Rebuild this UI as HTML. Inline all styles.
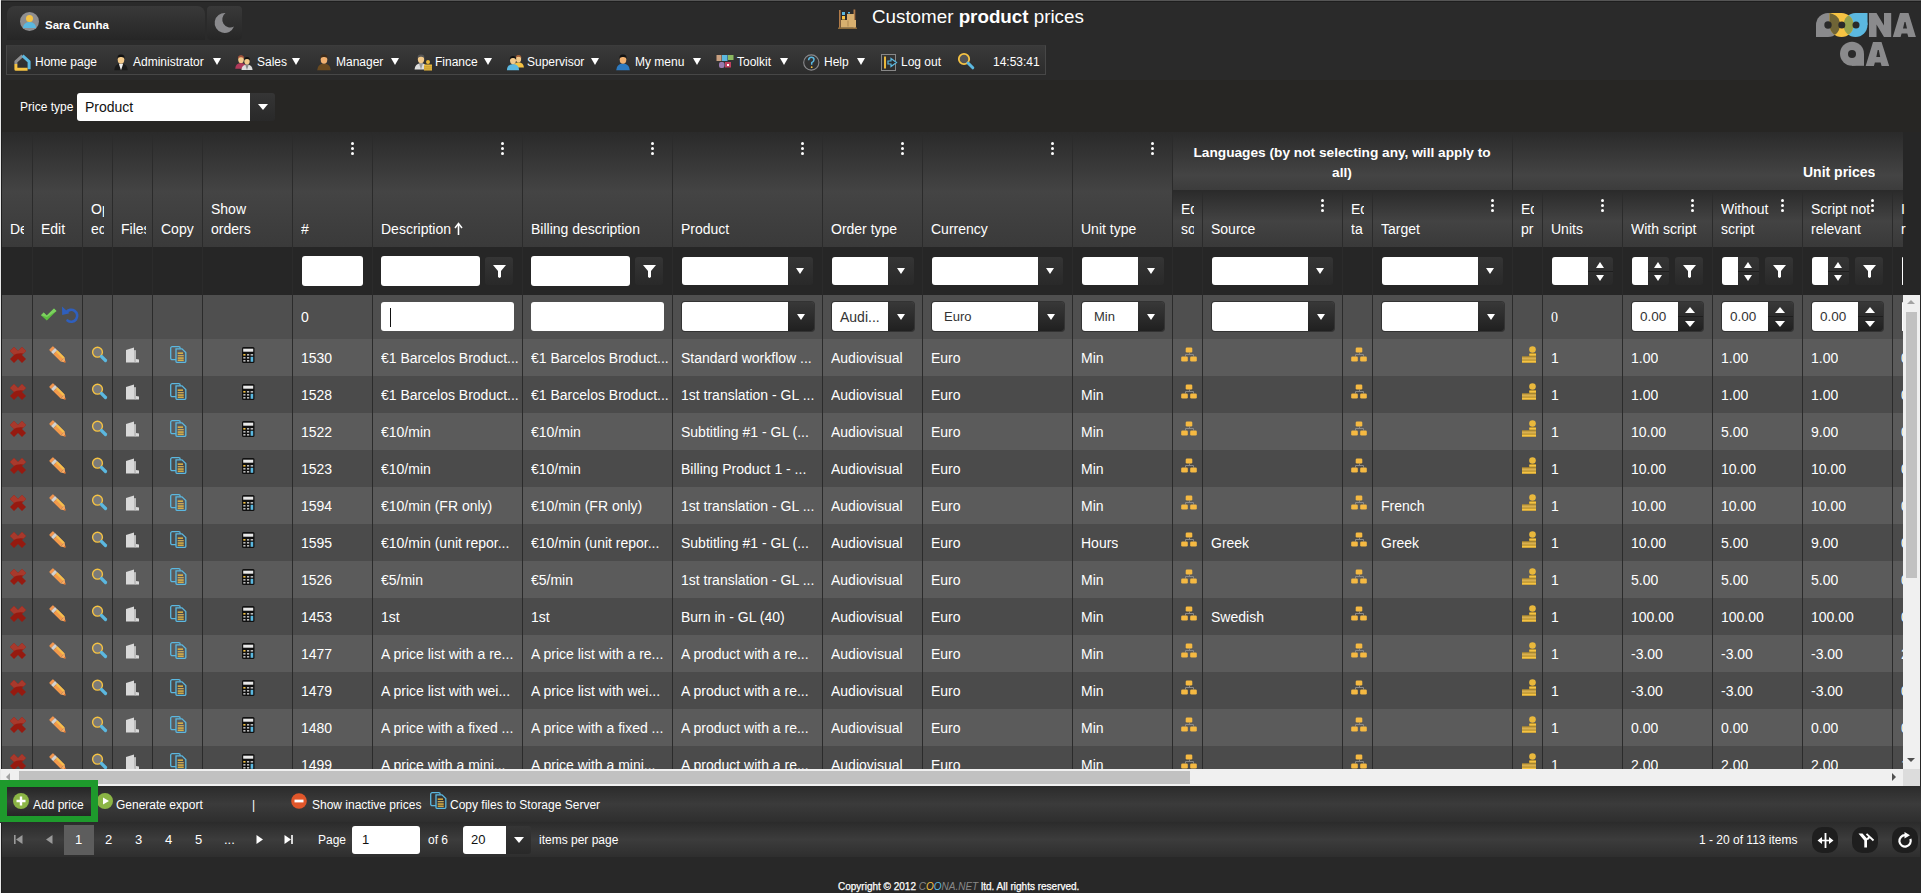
<!DOCTYPE html><html><head><meta charset="utf-8"><title>Customer product prices</title><style>
*{box-sizing:border-box;margin:0;padding:0}
html,body{width:1921px;height:893px;overflow:hidden;background:#282828;font-family:"Liberation Sans",sans-serif;color:#fff}
.a{position:absolute}
svg.a{overflow:visible}
.t{position:absolute;white-space:nowrap;line-height:16px}
.hd{position:absolute;overflow:hidden;font-size:14px;color:#fff;white-space:nowrap}
.cell{position:absolute;overflow:hidden;white-space:nowrap;font-size:14px;color:#fff;line-height:16px}
.vl{position:absolute;width:1px;background:#2b2b2b}
.dots{position:absolute;width:3px;height:13px}
.dots i{position:absolute;left:0;width:3px;height:3px;border-radius:50%;background:#fff}
.inp{position:absolute;background:#fff;border-radius:3px}
.fb{position:absolute;border-radius:3px;background:linear-gradient(#353535,#292929)}
.eb{position:absolute;background:linear-gradient(#383838,#202020);box-shadow:0 0 0 1px #333}
.tri{position:absolute;width:0;height:0;border-left:5px solid transparent;border-right:5px solid transparent;border-top:6px solid #fff}
.triu{position:absolute;width:0;height:0;border-left:5px solid transparent;border-right:5px solid transparent;border-bottom:6px solid #fff}
.clip{position:absolute;overflow:hidden}
</style></head><body>
<div class="a" style="left:0;top:0;width:1921px;height:80px;background:#2a2a2a"></div>
<div class="a" style="left:0;top:80px;width:1921px;height:52px;background:#272624"></div>
<div class="a" style="left:0;top:0;width:1921px;height:1px;background:#555"></div>
<div class="a" style="left:0;top:1px;width:1921px;height:1px;background:#1e1e1e"></div>
<div class="a" style="left:7px;top:6px;width:198px;height:34px;border-radius:8px 8px 0 0;background:linear-gradient(#393939,#262626)"></div>
<div class="a" style="left:20px;top:12px;width:19px;height:19px;border-radius:50%;background:#8e8e90;overflow:hidden"><div class="a" style="left:6px;top:3px;width:7px;height:7px;border-radius:50%;background:#f6c343"></div><div class="a" style="left:3px;top:10px;width:13px;height:6px;border-radius:6px 6px 0 0;background:#5bb8e0"></div></div>
<div class="t" style="left:45px;top:17px;font-size:11.5px;font-weight:bold">Sara Cunha</div>
<div class="a" style="left:207px;top:6px;width:35px;height:34px;border-radius:4px;background:linear-gradient(#393939,#262626)"></div>
<svg class="a" style="left:213px;top:12px" width="22" height="22" viewBox="0 0 22 22"><path d="M12.5 1 A10 10 0 1 0 21 14.5 A8 8 0 0 1 12.5 1Z" fill="#8a8a8d"/></svg>
<svg class="a" style="left:838px;top:9px" width="21" height="20" viewBox="0 0 21 20"><rect x="1" y="1" width="1.6" height="19" fill="#b07a48"/><rect x="15.5" y="0.5" width="1.8" height="19.5" fill="#b07a48"/><rect x="0" y="18.5" width="19" height="1.5" fill="#8c6a3a"/><rect x="3" y="11" width="15" height="7.5" fill="#d8b070"/><rect x="9" y="5" width="7" height="6" fill="#d8b070"/><rect x="9.5" y="11.5" width="1" height="6" fill="#b08850"/><rect x="4" y="3" width="3" height="3" fill="#5bb8e0"/><rect x="4" y="7" width="3" height="3.5" fill="#f6c343"/><rect x="10" y="3" width="2" height="1.5" fill="#5bb8e0"/></svg>
<div class="t" style="left:872px;top:6px;font-size:18.8px;line-height:22px">Customer <b>product</b> prices</div>
<svg class="a" style="left:1812px;top:10px" width="106" height="58" viewBox="0 0 106 58">
<defs><clipPath id="cg"><circle cx="16" cy="15" r="12"/><rect x="4" y="15" width="12" height="12"/></clipPath>
<clipPath id="cy"><circle cx="29.5" cy="15" r="12"/><rect x="17.5" y="3" width="12" height="12"/></clipPath></defs>
<circle cx="16" cy="15" r="12" fill="#8a8a8c"/><rect x="4" y="15" width="12" height="12" fill="#8a8a8c"/>
<circle cx="43.5" cy="15" r="12" fill="#5bb8e0"/><rect x="43.5" y="3" width="12" height="12" fill="#5bb8e0"/>
<circle cx="29.5" cy="15" r="12" fill="#f6c343"/><rect x="17.5" y="3" width="12" height="12" fill="#f6c343"/>
<g clip-path="url(#cg)"><circle cx="29.5" cy="15" r="12" fill="#6f6436"/><rect x="17.5" y="3" width="12" height="12" fill="#6f6436"/></g>
<g clip-path="url(#cy)"><circle cx="43.5" cy="15" r="12" fill="#93a04e"/></g>
<circle cx="16" cy="15" r="3.7" fill="#2a2a2a"/><circle cx="29.8" cy="15" r="3.5" fill="#2a2a2a"/><circle cx="44" cy="15" r="3.5" fill="#2a2a2a"/>
<path d="M57 27 V3 H64.5 L72 15.5 V3 H79.2 V27 H72 L64.5 14.5 V27Z" fill="#8a8a8c"/>
<path d="M80.8 27 L88 3 H96.5 L103.9 27 H96.3 L95.3 23.5 H89.6 L88.6 27Z M91 18.5 L92.5 12 H93.5 L95 18.5Z" fill="#8a8a8c" fill-rule="evenodd"/>
<circle cx="40" cy="43.8" r="12" fill="#8a8a8c"/><rect x="40" y="43.8" width="12" height="12" fill="#8a8a8c"/>
<circle cx="40" cy="44" r="4" fill="#2a2a2a"/>
<path d="M53.7 56 L61 32 H69.5 L77.2 56 H69.6 L68.6 52.5 H62.9 L61.9 56Z M64.3 47 L65.7 40 H66.8 L68.2 47Z" fill="#8a8a8c" fill-rule="evenodd"/>
</svg>
<div class="a" style="left:6px;top:45px;width:1040px;height:30px;background:linear-gradient(#3a3a3a,#2c2c2c);border:1px solid #474747;border-top-color:#3c3c3c"></div>
<div class="t" style="left:35px;top:54px;font-size:12px">Home page</div>
<svg class="a" style="left:14px;top:54px" width="17" height="17" viewBox="0 0 17 17"><path d="M1.9 10 V7.6 L8.5 1.6" stroke="#8e8e90" stroke-width="3" fill="none" stroke-linejoin="round"/><path d="M8.5 1.6 L15.1 7.6 V15.2" stroke="#5bb8e0" stroke-width="3" fill="none" stroke-linejoin="round"/><path d="M1.9 10 V15.2 H13.6" stroke="#f6c343" stroke-width="3" fill="none" stroke-linejoin="round"/></svg>
<div class="t" style="left:133px;top:54px;font-size:12px">Administrator</div>
<div class="tri" style="left:213px;top:58px;border-left-width:4px;border-right-width:4px;border-top-width:7px"></div>
<svg class="a" style="left:113px;top:54px" width="16" height="16" viewBox="0 0 16 16"><path d="M1.20 16.30 Q1.50 10.00 8.00 9.60 Q14.50 10.00 14.80 16.30 Z" fill="#1a1a1a"/><path d="M5.80 9.80 L8.00 16.30 L10.20 9.80 Z" fill="#eee"/><ellipse cx="8.00" cy="5.40" rx="3.30" ry="4.30" fill="#f2c98a"/><path d="M4.40 5.00 Q4.10 0.40 8.00 0.60 Q11.90 0.40 11.60 5.00 Q10.80 2.70 8.00 2.90 Q5.20 2.70 4.40 5.00 Z" fill="#111"/></svg>
<div class="t" style="left:257px;top:54px;font-size:12px">Sales</div>
<div class="tri" style="left:292px;top:58px;border-left-width:4px;border-right-width:4px;border-top-width:7px"></div>
<svg class="a" style="left:236px;top:54px" width="17" height="16" viewBox="0 0 17 16"><path d="M-0.78 14.67 Q-0.52 9.32 5.00 8.98 Q10.52 9.32 10.78 14.67 Z" fill="#b03a5a"/><ellipse cx="5.00" cy="5.41" rx="2.80" ry="3.65" fill="#f2c98a"/><path d="M1.94 5.07 Q1.69 1.16 5.00 1.33 Q8.31 1.16 8.06 5.07 Q7.38 3.12 5.00 3.29 Q2.62 3.12 1.94 5.07 Z" fill="#a0503a"/><path d="M5.42 15.91 Q5.67 10.74 11.00 10.42 Q16.33 10.74 16.58 15.91 Z" fill="#ddd"/><path d="M9.20 10.58 L11.00 15.91 L12.80 10.58 Z" fill="#888"/><ellipse cx="11.00" cy="6.97" rx="2.71" ry="3.53" fill="#f2c98a"/><path d="M8.05 6.64 Q7.80 2.87 11.00 3.04 Q14.20 2.87 13.95 6.64 Q13.30 4.76 11.00 4.92 Q8.70 4.76 8.05 6.64 Z" fill="#111"/></svg>
<div class="t" style="left:336px;top:54px;font-size:12px">Manager</div>
<div class="tri" style="left:391px;top:58px;border-left-width:4px;border-right-width:4px;border-top-width:7px"></div>
<svg class="a" style="left:316px;top:54px" width="16" height="16" viewBox="0 0 16 16"><path d="M1.20 16.30 Q1.50 10.00 8.00 9.60 Q14.50 10.00 14.80 16.30 Z" fill="#6a4a20"/><ellipse cx="8.00" cy="5.40" rx="3.30" ry="4.30" fill="#f0b070"/><path d="M4.40 5.00 Q4.10 0.40 8.00 0.60 Q11.90 0.40 11.60 5.00 Q10.80 2.70 8.00 2.90 Q5.20 2.70 4.40 5.00 Z" fill="#3a2a1a"/></svg>
<div class="t" style="left:435px;top:54px;font-size:12px">Finance</div>
<div class="tri" style="left:484px;top:58px;border-left-width:4px;border-right-width:4px;border-top-width:7px"></div>
<svg class="a" style="left:415px;top:54px" width="17" height="17" viewBox="0 0 17 17"><path d="M-0.46 15.53 Q-0.17 9.54 6.00 9.16 Q12.18 9.54 12.46 15.53 Z" fill="#ddd"/><path d="M3.91 9.35 L6.00 15.53 L8.09 9.35 Z" fill="#999"/><ellipse cx="6.00" cy="5.17" rx="3.13" ry="4.08" fill="#f2c98a"/><path d="M2.58 4.79 Q2.30 0.42 6.00 0.61 Q9.71 0.42 9.42 4.79 Q8.66 2.60 6.00 2.79 Q3.34 2.60 2.58 4.79 Z" fill="#555"/><circle cx="13" cy="8" r="2" fill="#e9b83c"/><rect x="9" y="10.5" width="8" height="6" fill="#e9b83c"/><rect x="9" y="12.5" width="8" height="0.8" fill="#b8922e"/><rect x="9" y="14.5" width="8" height="0.8" fill="#b8922e"/></svg>
<div class="t" style="left:527px;top:54px;font-size:12px">Supervisor</div>
<div class="tri" style="left:591px;top:58px;border-left-width:4px;border-right-width:4px;border-top-width:7px"></div>
<svg class="a" style="left:507px;top:54px" width="17" height="16" viewBox="0 0 17 16"><path d="M6.06 13.60 Q6.30 8.56 11.50 8.24 Q16.70 8.56 16.94 13.60 Z" fill="#f6c343"/><ellipse cx="11.50" cy="4.88" rx="2.64" ry="3.44" fill="#f2c98a"/><path d="M8.62 4.56 Q8.38 0.88 11.50 1.04 Q14.62 0.88 14.38 4.56 Q13.74 2.72 11.50 2.88 Q9.26 2.72 8.62 4.56 Z" fill="#a0603a"/><path d="M-0.12 16.15 Q0.15 10.48 6.00 10.12 Q11.85 10.48 12.12 16.15 Z" fill="#5bb8e0"/><ellipse cx="6.00" cy="6.34" rx="2.97" ry="3.87" fill="#f2c98a"/><path d="M2.76 5.98 Q2.49 1.84 6.00 2.02 Q9.51 1.84 9.24 5.98 Q8.52 3.91 6.00 4.09 Q3.48 3.91 2.76 5.98 Z" fill="#111"/></svg>
<div class="t" style="left:635px;top:54px;font-size:12px">My menu</div>
<div class="tri" style="left:693px;top:58px;border-left-width:4px;border-right-width:4px;border-top-width:7px"></div>
<svg class="a" style="left:615px;top:54px" width="16" height="16" viewBox="0 0 16 16"><path d="M1.20 16.30 Q1.50 10.00 8.00 9.60 Q14.50 10.00 14.80 16.30 Z" fill="#2d7ac0"/><ellipse cx="8.00" cy="5.40" rx="3.30" ry="4.30" fill="#f0b070"/><path d="M4.40 5.00 Q4.10 0.40 8.00 0.60 Q11.90 0.40 11.60 5.00 Q10.80 2.70 8.00 2.90 Q5.20 2.70 4.40 5.00 Z" fill="#111"/></svg>
<div class="t" style="left:737px;top:54px;font-size:12px">Toolkit</div>
<div class="tri" style="left:780px;top:58px;border-left-width:4px;border-right-width:4px;border-top-width:7px"></div>
<svg class="a" style="left:716px;top:54px" width="18" height="15" viewBox="0 0 18 15"><rect x="0.5" y="1" width="5" height="6" fill="#c9a080"/><rect x="6" y="1" width="5.5" height="6" fill="#5bb8e0"/><rect x="12" y="1" width="5.5" height="5" fill="#8ab860"/><rect x="3" y="8" width="5.5" height="6" rx="2" fill="#9a7ab0"/><rect x="9" y="8" width="6" height="5.5" fill="#c04060"/><rect x="11" y="10" width="2" height="2" fill="#fff"/></svg>
<div class="t" style="left:824px;top:54px;font-size:12px">Help</div>
<div class="tri" style="left:857px;top:58px;border-left-width:4px;border-right-width:4px;border-top-width:7px"></div>
<svg class="a" style="left:803px;top:54px" width="17" height="17" viewBox="0 0 17 17"><circle cx="8.3" cy="8.5" r="7.6" fill="none" stroke="#8a8a8d" stroke-width="1.1"/><path d="M5.6 6.2 Q5.8 3.3 8.4 3.3 Q11 3.3 11 5.7 Q11 7.4 8.7 8.6 V10.8" fill="none" stroke="#5bb8e0" stroke-width="1.5"/><circle cx="8.7" cy="13.2" r="0.9" fill="#f6c343"/></svg>
<div class="t" style="left:901px;top:54px;font-size:12px">Log out</div>
<svg class="a" style="left:881px;top:54px" width="17" height="17" viewBox="0 0 17 17"><rect x="0.5" y="0.5" width="14" height="16" fill="none" stroke="#888" stroke-width="1"/><rect x="3" y="2.5" width="2" height="12" fill="#e9b83c"/><path d="M7 7 H10 V4.5 L15.5 8.5 L10 12.5 V10 H7Z" fill="#2a2a2a" stroke="#5bb8e0" stroke-width="1.2"/></svg>
<div class="t" style="left:993px;top:54px;font-size:12px">14:53:41</div>
<svg class="a" style="left:957px;top:52px" width="18" height="18" viewBox="0 0 18 18"><circle cx="7" cy="7" r="5.2" fill="#555" stroke="#f6c343" stroke-width="1.8"/><path d="M11 11 L15.8 15.8" stroke="#5bb8e0" stroke-width="3" stroke-linecap="round"/></svg>
<div class="t" style="left:20px;top:99px;font-size:12px">Price type</div>
<div class="inp" style="left:77px;top:93px;width:174px;height:28px;border-radius:3px 0 0 3px"></div>
<div class="t" style="left:85px;top:99px;font-size:14px;color:#111">Product</div>
<div class="fb" style="left:250px;top:93px;width:25px;height:28px;border-radius:0 3px 3px 0"></div>
<div class="tri" style="left:258px;top:104px"></div>
<div class="a" style="left:0;top:132px;width:1921px;height:637px;background:#262626"></div>
<div class="a" style="left:1px;top:132px;width:1171px;height:115px;background:linear-gradient(#2a2a2a 0%,#444 52%,#3a3a3a 100%)"></div>
<div class="a" style="left:1172px;top:132px;width:731px;height:58px;background:linear-gradient(#2a2a2a 0%,#444 75%,#3c3c3c 100%)"></div>
<div class="a" style="left:1172px;top:190px;width:731px;height:57px;background:linear-gradient(#2a2a2a 0%,#434343 55%,#393939 100%)"></div>
<div class="a" style="left:1px;top:247px;width:1902px;height:48px;background:#262626"></div>
<div class="a" style="left:1px;top:295px;width:1902px;height:44px;background:#4f4f4f"></div>
<div class="a" style="left:1px;top:339px;width:1902px;height:37px;background:#5b5b5b"></div>
<div class="a" style="left:1px;top:376px;width:1902px;height:37px;background:#4b4b4b"></div>
<div class="a" style="left:1px;top:413px;width:1902px;height:37px;background:#5b5b5b"></div>
<div class="a" style="left:1px;top:450px;width:1902px;height:37px;background:#4b4b4b"></div>
<div class="a" style="left:1px;top:487px;width:1902px;height:37px;background:#5b5b5b"></div>
<div class="a" style="left:1px;top:524px;width:1902px;height:37px;background:#4b4b4b"></div>
<div class="a" style="left:1px;top:561px;width:1902px;height:37px;background:#5b5b5b"></div>
<div class="a" style="left:1px;top:598px;width:1902px;height:37px;background:#4b4b4b"></div>
<div class="a" style="left:1px;top:635px;width:1902px;height:37px;background:#5b5b5b"></div>
<div class="a" style="left:1px;top:672px;width:1902px;height:37px;background:#4b4b4b"></div>
<div class="a" style="left:1px;top:709px;width:1902px;height:37px;background:#5b5b5b"></div>
<div class="a" style="left:1px;top:746px;width:1902px;height:37px;background:#4b4b4b"></div>
<div class="vl" style="left:32px;top:132px;height:637px"></div>
<div class="vl" style="left:82px;top:132px;height:637px"></div>
<div class="vl" style="left:112px;top:132px;height:637px"></div>
<div class="vl" style="left:152px;top:132px;height:637px"></div>
<div class="vl" style="left:202px;top:132px;height:637px"></div>
<div class="vl" style="left:292px;top:132px;height:637px"></div>
<div class="vl" style="left:372px;top:132px;height:637px"></div>
<div class="vl" style="left:522px;top:132px;height:637px"></div>
<div class="vl" style="left:672px;top:132px;height:637px"></div>
<div class="vl" style="left:822px;top:132px;height:637px"></div>
<div class="vl" style="left:922px;top:132px;height:637px"></div>
<div class="vl" style="left:1072px;top:132px;height:637px"></div>
<div class="vl" style="left:1172px;top:132px;height:637px"></div>
<div class="vl" style="left:1202px;top:190px;height:579px"></div>
<div class="vl" style="left:1342px;top:190px;height:579px"></div>
<div class="vl" style="left:1372px;top:190px;height:579px"></div>
<div class="vl" style="left:1512px;top:132px;height:637px"></div>
<div class="vl" style="left:1542px;top:190px;height:579px"></div>
<div class="vl" style="left:1622px;top:190px;height:579px"></div>
<div class="vl" style="left:1712px;top:190px;height:579px"></div>
<div class="vl" style="left:1802px;top:190px;height:579px"></div>
<div class="vl" style="left:1892px;top:190px;height:579px"></div>
<div class="hd" style="left:10px;top:221px;width:14px;height:17px;line-height:16px">De</div>
<div class="hd" style="left:41px;top:221px;width:33px;height:17px;line-height:16px">Edit</div>
<div class="hd" style="left:91px;top:201px;width:13px;height:17px;line-height:16px">Op</div>
<div class="hd" style="left:91px;top:221px;width:13px;height:17px;line-height:16px">ec</div>
<div class="hd" style="left:121px;top:221px;width:25px;height:17px;line-height:16px">Files</div>
<div class="hd" style="left:161px;top:221px;width:33px;height:17px;line-height:16px">Copy</div>
<div class="hd" style="left:211px;top:201px;width:73px;height:17px;line-height:16px">Show</div>
<div class="hd" style="left:211px;top:221px;width:73px;height:17px;line-height:16px">orders</div>
<div class="hd" style="left:301px;top:221px;width:63px;height:17px;line-height:16px">#</div>
<div class="hd" style="left:381px;top:221px;width:133px;height:17px;line-height:16px">Description</div>
<div class="hd" style="left:531px;top:221px;width:133px;height:17px;line-height:16px">Billing description</div>
<div class="hd" style="left:681px;top:221px;width:133px;height:17px;line-height:16px">Product</div>
<div class="hd" style="left:831px;top:221px;width:83px;height:17px;line-height:16px">Order type</div>
<div class="hd" style="left:931px;top:221px;width:133px;height:17px;line-height:16px">Currency</div>
<div class="hd" style="left:1081px;top:221px;width:83px;height:17px;line-height:16px">Unit type</div>
<div class="hd" style="left:1181px;top:201px;width:13px;height:17px;line-height:16px">Ed</div>
<div class="hd" style="left:1181px;top:221px;width:13px;height:17px;line-height:16px">so</div>
<div class="hd" style="left:1211px;top:221px;width:123px;height:17px;line-height:16px">Source</div>
<div class="hd" style="left:1351px;top:201px;width:13px;height:17px;line-height:16px">Ed</div>
<div class="hd" style="left:1351px;top:221px;width:13px;height:17px;line-height:16px">ta</div>
<div class="hd" style="left:1381px;top:221px;width:123px;height:17px;line-height:16px">Target</div>
<div class="hd" style="left:1521px;top:201px;width:13px;height:17px;line-height:16px">Ed</div>
<div class="hd" style="left:1521px;top:221px;width:13px;height:17px;line-height:16px">pr</div>
<div class="hd" style="left:1551px;top:221px;width:63px;height:17px;line-height:16px">Units</div>
<div class="hd" style="left:1631px;top:221px;width:73px;height:17px;line-height:16px">With script</div>
<div class="hd" style="left:1721px;top:201px;width:73px;height:17px;line-height:16px">Without</div>
<div class="hd" style="left:1721px;top:221px;width:73px;height:17px;line-height:16px">script</div>
<div class="hd" style="left:1811px;top:201px;width:73px;height:17px;line-height:16px">Script not</div>
<div class="hd" style="left:1811px;top:221px;width:73px;height:17px;line-height:16px">relevant</div>
<div class="hd" style="left:1901px;top:201px;width:-6px;height:17px;line-height:16px">I</div>
<div class="hd" style="left:1901px;top:221px;width:-6px;height:17px;line-height:16px">r</div>
<svg class="a" style="left:455px;top:223px" width="7" height="12" viewBox="0 0 7 12"><path d="M3.5 1.5 V12" stroke="#fff" stroke-width="1.6"/><path d="M0 5 L3.5 0.5 L7 5" fill="none" stroke="#fff" stroke-width="1.5"/></svg>
<div class="dots" style="left:351px;top:142px"><i style="top:0"></i><i style="top:5px"></i><i style="top:10px"></i></div>
<div class="dots" style="left:501px;top:142px"><i style="top:0"></i><i style="top:5px"></i><i style="top:10px"></i></div>
<div class="dots" style="left:651px;top:142px"><i style="top:0"></i><i style="top:5px"></i><i style="top:10px"></i></div>
<div class="dots" style="left:801px;top:142px"><i style="top:0"></i><i style="top:5px"></i><i style="top:10px"></i></div>
<div class="dots" style="left:901px;top:142px"><i style="top:0"></i><i style="top:5px"></i><i style="top:10px"></i></div>
<div class="dots" style="left:1051px;top:142px"><i style="top:0"></i><i style="top:5px"></i><i style="top:10px"></i></div>
<div class="dots" style="left:1151px;top:142px"><i style="top:0"></i><i style="top:5px"></i><i style="top:10px"></i></div>
<div class="dots" style="left:1321px;top:199px"><i style="top:0"></i><i style="top:5px"></i><i style="top:10px"></i></div>
<div class="dots" style="left:1491px;top:199px"><i style="top:0"></i><i style="top:5px"></i><i style="top:10px"></i></div>
<div class="dots" style="left:1601px;top:199px"><i style="top:0"></i><i style="top:5px"></i><i style="top:10px"></i></div>
<div class="dots" style="left:1691px;top:199px"><i style="top:0"></i><i style="top:5px"></i><i style="top:10px"></i></div>
<div class="dots" style="left:1781px;top:199px"><i style="top:0"></i><i style="top:5px"></i><i style="top:10px"></i></div>
<div class="dots" style="left:1871px;top:199px"><i style="top:0"></i><i style="top:5px"></i><i style="top:10px"></i></div>
<div class="hd" style="left:1172px;top:143px;width:340px;text-align:center;font-weight:bold;font-size:13.7px;line-height:19.5px;white-space:normal;padding:0 18px">Languages (by not selecting any, will apply to all)</div>
<div class="hd" style="left:1803px;top:164px;font-weight:bold;line-height:16px">Unit prices</div>
<div class="inp" style="left:302px;top:256px;width:61px;height:30px;"></div>
<div class="inp" style="left:381px;top:256px;width:99px;height:30px;"></div>
<div class="fb" style="left:485px;top:257px;width:28px;height:28px"></div>
<svg class="a" style="left:493px;top:265px" width="13" height="13" viewBox="0 0 13 13"><path d="M0 0 H13 L8 6 V12 L6.5 13 L5 12 V6Z" fill="#fff"/></svg>
<div class="inp" style="left:531px;top:256px;width:99px;height:30px;"></div>
<div class="fb" style="left:635px;top:257px;width:28px;height:28px"></div>
<svg class="a" style="left:643px;top:265px" width="13" height="13" viewBox="0 0 13 13"><path d="M0 0 H13 L8 6 V12 L6.5 13 L5 12 V6Z" fill="#fff"/></svg>
<div class="fb" style="left:682px;top:257px;width:131px;height:28px;border-radius:3px"></div>
<div class="inp" style="left:682px;top:257px;width:106px;height:28px;border-radius:3px 0 0 3px"></div>
<div class="tri" style="left:796px;top:268px;border-left-width:4.5px;border-right-width:4.5px"></div>
<div class="fb" style="left:832px;top:257px;width:82px;height:28px;border-radius:3px"></div>
<div class="inp" style="left:832px;top:257px;width:56px;height:28px;border-radius:3px 0 0 3px"></div>
<div class="tri" style="left:897px;top:268px;border-left-width:4.5px;border-right-width:4.5px"></div>
<div class="fb" style="left:932px;top:257px;width:131px;height:28px;border-radius:3px"></div>
<div class="inp" style="left:932px;top:257px;width:106px;height:28px;border-radius:3px 0 0 3px"></div>
<div class="tri" style="left:1046px;top:268px;border-left-width:4.5px;border-right-width:4.5px"></div>
<div class="fb" style="left:1082px;top:257px;width:82px;height:28px;border-radius:3px"></div>
<div class="inp" style="left:1082px;top:257px;width:56px;height:28px;border-radius:3px 0 0 3px"></div>
<div class="tri" style="left:1147px;top:268px;border-left-width:4.5px;border-right-width:4.5px"></div>
<div class="fb" style="left:1212px;top:257px;width:121px;height:28px;border-radius:3px"></div>
<div class="inp" style="left:1212px;top:257px;width:96px;height:28px;border-radius:3px 0 0 3px"></div>
<div class="tri" style="left:1316px;top:268px;border-left-width:4.5px;border-right-width:4.5px"></div>
<div class="fb" style="left:1382px;top:257px;width:121px;height:28px;border-radius:3px"></div>
<div class="inp" style="left:1382px;top:257px;width:96px;height:28px;border-radius:3px 0 0 3px"></div>
<div class="tri" style="left:1486px;top:268px;border-left-width:4.5px;border-right-width:4.5px"></div>
<div class="fb" style="left:1552px;top:257px;width:61px;height:28px;border-radius:3px"></div>
<div class="inp" style="left:1552px;top:257px;width:36px;height:28px;border-radius:3px 0 0 3px"></div>
<div class="a" style="left:1588px;top:271px;width:25px;height:1px;background:#1e1e1e"></div>
<div class="triu" style="left:1596px;top:262px;border-left-width:4.5px;border-right-width:4.5px;border-bottom-width:6px"></div>
<div class="tri" style="left:1596px;top:275px;border-left-width:4.5px;border-right-width:4.5px;border-top-width:6px"></div>
<div class="fb" style="left:1632px;top:257px;width:37px;height:28px;border-radius:3px"></div>
<div class="inp" style="left:1632px;top:257px;width:16px;height:28px;border-radius:3px 0 0 3px"></div>
<div class="a" style="left:1648px;top:271px;width:21px;height:1px;background:#1e1e1e"></div>
<div class="triu" style="left:1654px;top:262px;border-left-width:4.5px;border-right-width:4.5px;border-bottom-width:6px"></div>
<div class="tri" style="left:1654px;top:275px;border-left-width:4.5px;border-right-width:4.5px;border-top-width:6px"></div>
<div class="fb" style="left:1675px;top:257px;width:28px;height:28px"></div>
<svg class="a" style="left:1683px;top:265px" width="13" height="13" viewBox="0 0 13 13"><path d="M0 0 H13 L8 6 V12 L6.5 13 L5 12 V6Z" fill="#fff"/></svg>
<div class="fb" style="left:1722px;top:257px;width:37px;height:28px;border-radius:3px"></div>
<div class="inp" style="left:1722px;top:257px;width:16px;height:28px;border-radius:3px 0 0 3px"></div>
<div class="a" style="left:1738px;top:271px;width:21px;height:1px;background:#1e1e1e"></div>
<div class="triu" style="left:1744px;top:262px;border-left-width:4.5px;border-right-width:4.5px;border-bottom-width:6px"></div>
<div class="tri" style="left:1744px;top:275px;border-left-width:4.5px;border-right-width:4.5px;border-top-width:6px"></div>
<div class="fb" style="left:1765px;top:257px;width:28px;height:28px"></div>
<svg class="a" style="left:1773px;top:265px" width="13" height="13" viewBox="0 0 13 13"><path d="M0 0 H13 L8 6 V12 L6.5 13 L5 12 V6Z" fill="#fff"/></svg>
<div class="fb" style="left:1812px;top:257px;width:37px;height:28px;border-radius:3px"></div>
<div class="inp" style="left:1812px;top:257px;width:16px;height:28px;border-radius:3px 0 0 3px"></div>
<div class="a" style="left:1828px;top:271px;width:21px;height:1px;background:#1e1e1e"></div>
<div class="triu" style="left:1834px;top:262px;border-left-width:4.5px;border-right-width:4.5px;border-bottom-width:6px"></div>
<div class="tri" style="left:1834px;top:275px;border-left-width:4.5px;border-right-width:4.5px;border-top-width:6px"></div>
<div class="fb" style="left:1855px;top:257px;width:28px;height:28px"></div>
<svg class="a" style="left:1863px;top:265px" width="13" height="13" viewBox="0 0 13 13"><path d="M0 0 H13 L8 6 V12 L6.5 13 L5 12 V6Z" fill="#fff"/></svg>
<div class="inp" style="left:1902px;top:257px;width:1px;height:28px;"></div>
<svg class="a" style="left:41px;top:308px" width="16" height="13" viewBox="0 0 16 13"><path d="M0 7.2 L2.7 4.6 L5.8 7.6 L13 0.5 L15.5 3 L5.8 12.6Z" fill="#5cbf3f"/><path d="M0 7.2 L2.7 4.6 L5.8 7.6 L13 0.5 L15.5 3 L5.8 9Z" fill="#7dd060"/></svg>
<svg class="a" style="left:61px;top:306px" width="17" height="17" viewBox="0 0 17 17"><path d="M5.2 6.5 A6 6 0 1 1 6.5 14.5" fill="none" stroke="#2f5fbd" stroke-width="2.6" stroke-linecap="round"/><path d="M1 0.5 L1.2 9 L8.5 7.2Z" fill="#2f5fbd"/></svg>
<div class="cell" style="left:301px;top:309px">0</div>
<div class="inp" style="left:381px;top:302px;width:133px;height:29px;"></div>
<div class="a" style="left:390px;top:308px;width:1px;height:19px;background:#111"></div>
<div class="inp" style="left:531px;top:302px;width:133px;height:29px;"></div>
<div class="eb" style="left:682px;top:302px;width:132px;height:29px;border-radius:3px"></div>
<div class="inp" style="left:682px;top:302px;width:106px;height:29px;border-radius:3px 0 0 3px"></div>
<div class="tri" style="left:797px;top:314px;border-left-width:4.5px;border-right-width:4.5px"></div>
<div class="eb" style="left:832px;top:302px;width:82px;height:29px;border-radius:3px"></div>
<div class="inp" style="left:832px;top:302px;width:56px;height:29px;border-radius:3px 0 0 3px"></div>
<div class="tri" style="left:897px;top:314px;border-left-width:4.5px;border-right-width:4.5px"></div>
<div class="t" style="left:840px;top:309px;font-size:14px;color:#333">Audi...</div>
<div class="eb" style="left:932px;top:302px;width:132px;height:29px;border-radius:3px"></div>
<div class="inp" style="left:932px;top:302px;width:106px;height:29px;border-radius:3px 0 0 3px"></div>
<div class="tri" style="left:1047px;top:314px;border-left-width:4.5px;border-right-width:4.5px"></div>
<div class="t" style="left:944px;top:309px;font-size:13px;color:#333">Euro</div>
<div class="eb" style="left:1082px;top:302px;width:82px;height:29px;border-radius:3px"></div>
<div class="inp" style="left:1082px;top:302px;width:56px;height:29px;border-radius:3px 0 0 3px"></div>
<div class="tri" style="left:1147px;top:314px;border-left-width:4.5px;border-right-width:4.5px"></div>
<div class="t" style="left:1094px;top:309px;font-size:13px;color:#333">Min</div>
<div class="eb" style="left:1212px;top:302px;width:122px;height:29px;border-radius:3px"></div>
<div class="inp" style="left:1212px;top:302px;width:96px;height:29px;border-radius:3px 0 0 3px"></div>
<div class="tri" style="left:1317px;top:314px;border-left-width:4.5px;border-right-width:4.5px"></div>
<div class="eb" style="left:1382px;top:302px;width:122px;height:29px;border-radius:3px"></div>
<div class="inp" style="left:1382px;top:302px;width:96px;height:29px;border-radius:3px 0 0 3px"></div>
<div class="tri" style="left:1487px;top:314px;border-left-width:4.5px;border-right-width:4.5px"></div>
<div class="cell" style="left:1551px;top:310px;font-family:'Liberation Serif',serif">0</div>
<div class="eb" style="left:1632px;top:302px;width:71px;height:29px;border-radius:3px"></div>
<div class="inp" style="left:1632px;top:302px;width:46px;height:29px;border-radius:3px 0 0 3px"></div>
<div class="a" style="left:1678px;top:316px;width:25px;height:1px;background:#1e1e1e"></div>
<div class="triu" style="left:1685px;top:307px;border-left-width:5px;border-right-width:5px;border-bottom-width:6px"></div>
<div class="tri" style="left:1685px;top:321px;border-left-width:5px;border-right-width:5px;border-top-width:6px"></div>
<div class="t" style="left:1640px;top:309px;font-size:13.5px;color:#333">0.00</div>
<div class="eb" style="left:1722px;top:302px;width:71px;height:29px;border-radius:3px"></div>
<div class="inp" style="left:1722px;top:302px;width:46px;height:29px;border-radius:3px 0 0 3px"></div>
<div class="a" style="left:1768px;top:316px;width:25px;height:1px;background:#1e1e1e"></div>
<div class="triu" style="left:1775px;top:307px;border-left-width:5px;border-right-width:5px;border-bottom-width:6px"></div>
<div class="tri" style="left:1775px;top:321px;border-left-width:5px;border-right-width:5px;border-top-width:6px"></div>
<div class="t" style="left:1730px;top:309px;font-size:13.5px;color:#333">0.00</div>
<div class="eb" style="left:1812px;top:302px;width:71px;height:29px;border-radius:3px"></div>
<div class="inp" style="left:1812px;top:302px;width:46px;height:29px;border-radius:3px 0 0 3px"></div>
<div class="a" style="left:1858px;top:316px;width:25px;height:1px;background:#1e1e1e"></div>
<div class="triu" style="left:1865px;top:307px;border-left-width:5px;border-right-width:5px;border-bottom-width:6px"></div>
<div class="tri" style="left:1865px;top:321px;border-left-width:5px;border-right-width:5px;border-top-width:6px"></div>
<div class="t" style="left:1820px;top:309px;font-size:13.5px;color:#333">0.00</div>
<div class="inp" style="left:1902px;top:302px;width:1px;height:29px;"></div>
<div class="cell" style="left:301px;top:350px">1530</div>
<div class="cell" style="left:381px;top:350px">€1 Barcelos Broduct...</div>
<div class="cell" style="left:531px;top:350px">€1 Barcelos Broduct...</div>
<div class="cell" style="left:681px;top:350px">Standard workflow ...</div>
<div class="cell" style="left:831px;top:350px">Audiovisual</div>
<div class="cell" style="left:931px;top:350px">Euro</div>
<div class="cell" style="left:1081px;top:350px">Min</div>
<div class="cell" style="left:1551px;top:350px">1</div>
<div class="cell" style="left:1631px;top:350px">1.00</div>
<div class="cell" style="left:1721px;top:350px">1.00</div>
<div class="cell" style="left:1811px;top:350px">1.00</div>
<div class="clip" style="left:1893px;top:339px;width:10px;height:37px"><div class="cell" style="left:8px;top:11px">0</div></div>
<svg class="a" style="left:10px;top:347px" width="16" height="16" viewBox="0 0 16 16"><path d="M0 4 L4 0 L8 4 L12 0 L16 4 L12 8 L16 12 L12 16 L8 12 L4 16 L0 12 L4 8Z" fill="#961a10"/><path d="M0 4 L4 0 L8 4 L12 0 L16 4 L13.5 6.5 Q8 5.5 2.5 8.5 L4 8Z" fill="#a8392c"/></svg>
<svg class="a" style="left:50px;top:347px" width="16" height="16" viewBox="0 0 16 16"><g transform="rotate(45 8 8)"><rect x="-2" y="5.2" width="3.2" height="5.6" rx="1" fill="#f2954e"/><rect x="1" y="5.2" width="3.2" height="5.6" fill="#d2d2d2"/><rect x="4.2" y="5.2" width="10.3" height="5.6" fill="#f39a4c"/><rect x="4.2" y="5.2" width="10.3" height="2" fill="#f4c04e"/><path d="M14.5 5.2 L18.6 8 L14.5 10.8Z" fill="#f5a860"/><path d="M17 6.9 L18.6 8 L17 9.1Z" fill="#e86a20"/></g></svg>
<svg class="a" style="left:91px;top:346px" width="17" height="17" viewBox="0 0 17 17"><circle cx="6.5" cy="6.2" r="4.9" fill="#7a7a7a" stroke="#f6c343" stroke-width="1.4"/><path d="M10.5 10.5 L14.5 14.5" stroke="#5bb8e0" stroke-width="3.2" stroke-linecap="round"/></svg>
<svg class="a" style="left:125px;top:347px" width="15" height="16" viewBox="0 0 15 16"><path d="M1 3 L9 0.5 L9 3.5 L11 3.5 L11 12 L14 12.5 L14 15.5 L1 15.5Z" fill="#d9d9d9"/><path d="M9 3.5 L9 14.5 L11 15.5 L11 3.5Z" fill="#bdbdbd"/></svg>
<svg class="a" style="left:170px;top:346px" width="17" height="17" viewBox="0 0 17 17"><rect x="0.7" y="0.7" width="9.5" height="13" rx="1.5" fill="none" stroke="#5bb8e0" stroke-width="1.3"/><path d="M6 2.8 H12 L15.8 6.6 V15.5 Q15.8 16.3 15 16.3 H6.8 Q6 16.3 6 15.5Z" fill="#5b5b5b" stroke="#5bb8e0" stroke-width="1.3"/><rect x="7.7" y="6.5" width="5.3" height="1.3" fill="#f6c343"/><rect x="7.7" y="9" width="6" height="1.3" fill="#c9a85a"/><rect x="7.7" y="11.4" width="6" height="1.3" fill="#f6c343"/><rect x="7.7" y="13.6" width="6" height="1.2" fill="#f6c343"/></svg>
<svg class="a" style="left:242px;top:347px" width="13" height="16" viewBox="0 0 13 16"><rect x="0" y="0" width="12.5" height="16" rx="1.5" fill="#111"/><rect x="1.2" y="1.7" width="10" height="3" fill="#e8e8e8"/><rect x="1.3" y="7" width="2.2" height="1.6" fill="#f6c343"/><rect x="5" y="7" width="2.2" height="1.6" fill="#bbb"/><rect x="8.6" y="7" width="2.5" height="1.6" fill="#bbb"/><rect x="1.3" y="10" width="2.2" height="1.6" fill="#bbb"/><rect x="5" y="10" width="2.2" height="1.6" fill="#bbb"/><rect x="1.3" y="13" width="2.2" height="1.6" fill="#bbb"/><rect x="5" y="13" width="2.2" height="1.6" fill="#bbb"/><rect x="8.6" y="9.8" width="2.6" height="5" fill="#5bb8e0"/></svg>
<svg class="a" style="left:1181px;top:347px" width="17" height="16" viewBox="0 0 17 16"><path d="M8.5 5.5 V7.5 M4.5 9.5 V7.5 H12.5 V9.5" stroke="#888" stroke-width="1" fill="none"/><rect x="4.7" y="0.5" width="6.6" height="5" rx="1.3" fill="#f5b942"/><rect x="0.2" y="9.5" width="6.6" height="5" rx="1.3" fill="#f5b942"/><rect x="9.2" y="9.5" width="6.6" height="5" rx="1.3" fill="#f5b942"/></svg>
<svg class="a" style="left:1351px;top:347px" width="17" height="16" viewBox="0 0 17 16"><path d="M8.5 5.5 V7.5 M4.5 9.5 V7.5 H12.5 V9.5" stroke="#888" stroke-width="1" fill="none"/><rect x="4.7" y="0.5" width="6.6" height="5" rx="1.3" fill="#f5b942"/><rect x="0.2" y="9.5" width="6.6" height="5" rx="1.3" fill="#f5b942"/><rect x="9.2" y="9.5" width="6.6" height="5" rx="1.3" fill="#f5b942"/></svg>
<svg class="a" style="left:1522px;top:346px" width="16" height="17" viewBox="0 0 16 17"><circle cx="10.5" cy="3.5" r="3.3" fill="#e9b83c"/><rect x="7.3" y="7" width="6.7" height="3.4" fill="#b8922e"/><rect x="7.3" y="8" width="6.7" height="1.5" fill="#f6c343"/><rect x="0" y="10.3" width="14" height="6.5" fill="#b8922e"/><rect x="0" y="11.5" width="14" height="2" fill="#d9b050"/><rect x="0" y="14.7" width="14" height="1.8" fill="#f6c343"/></svg>
<div class="cell" style="left:301px;top:387px">1528</div>
<div class="cell" style="left:381px;top:387px">€1 Barcelos Broduct...</div>
<div class="cell" style="left:531px;top:387px">€1 Barcelos Broduct...</div>
<div class="cell" style="left:681px;top:387px">1st translation - GL ...</div>
<div class="cell" style="left:831px;top:387px">Audiovisual</div>
<div class="cell" style="left:931px;top:387px">Euro</div>
<div class="cell" style="left:1081px;top:387px">Min</div>
<div class="cell" style="left:1551px;top:387px">1</div>
<div class="cell" style="left:1631px;top:387px">1.00</div>
<div class="cell" style="left:1721px;top:387px">1.00</div>
<div class="cell" style="left:1811px;top:387px">1.00</div>
<div class="clip" style="left:1893px;top:376px;width:10px;height:37px"><div class="cell" style="left:8px;top:11px">0</div></div>
<svg class="a" style="left:10px;top:384px" width="16" height="16" viewBox="0 0 16 16"><path d="M0 4 L4 0 L8 4 L12 0 L16 4 L12 8 L16 12 L12 16 L8 12 L4 16 L0 12 L4 8Z" fill="#961a10"/><path d="M0 4 L4 0 L8 4 L12 0 L16 4 L13.5 6.5 Q8 5.5 2.5 8.5 L4 8Z" fill="#a8392c"/></svg>
<svg class="a" style="left:50px;top:384px" width="16" height="16" viewBox="0 0 16 16"><g transform="rotate(45 8 8)"><rect x="-2" y="5.2" width="3.2" height="5.6" rx="1" fill="#f2954e"/><rect x="1" y="5.2" width="3.2" height="5.6" fill="#d2d2d2"/><rect x="4.2" y="5.2" width="10.3" height="5.6" fill="#f39a4c"/><rect x="4.2" y="5.2" width="10.3" height="2" fill="#f4c04e"/><path d="M14.5 5.2 L18.6 8 L14.5 10.8Z" fill="#f5a860"/><path d="M17 6.9 L18.6 8 L17 9.1Z" fill="#e86a20"/></g></svg>
<svg class="a" style="left:91px;top:383px" width="17" height="17" viewBox="0 0 17 17"><circle cx="6.5" cy="6.2" r="4.9" fill="#7a7a7a" stroke="#f6c343" stroke-width="1.4"/><path d="M10.5 10.5 L14.5 14.5" stroke="#5bb8e0" stroke-width="3.2" stroke-linecap="round"/></svg>
<svg class="a" style="left:125px;top:384px" width="15" height="16" viewBox="0 0 15 16"><path d="M1 3 L9 0.5 L9 3.5 L11 3.5 L11 12 L14 12.5 L14 15.5 L1 15.5Z" fill="#d9d9d9"/><path d="M9 3.5 L9 14.5 L11 15.5 L11 3.5Z" fill="#bdbdbd"/></svg>
<svg class="a" style="left:170px;top:383px" width="17" height="17" viewBox="0 0 17 17"><rect x="0.7" y="0.7" width="9.5" height="13" rx="1.5" fill="none" stroke="#5bb8e0" stroke-width="1.3"/><path d="M6 2.8 H12 L15.8 6.6 V15.5 Q15.8 16.3 15 16.3 H6.8 Q6 16.3 6 15.5Z" fill="#4b4b4b" stroke="#5bb8e0" stroke-width="1.3"/><rect x="7.7" y="6.5" width="5.3" height="1.3" fill="#f6c343"/><rect x="7.7" y="9" width="6" height="1.3" fill="#c9a85a"/><rect x="7.7" y="11.4" width="6" height="1.3" fill="#f6c343"/><rect x="7.7" y="13.6" width="6" height="1.2" fill="#f6c343"/></svg>
<svg class="a" style="left:242px;top:384px" width="13" height="16" viewBox="0 0 13 16"><rect x="0" y="0" width="12.5" height="16" rx="1.5" fill="#111"/><rect x="1.2" y="1.7" width="10" height="3" fill="#e8e8e8"/><rect x="1.3" y="7" width="2.2" height="1.6" fill="#f6c343"/><rect x="5" y="7" width="2.2" height="1.6" fill="#bbb"/><rect x="8.6" y="7" width="2.5" height="1.6" fill="#bbb"/><rect x="1.3" y="10" width="2.2" height="1.6" fill="#bbb"/><rect x="5" y="10" width="2.2" height="1.6" fill="#bbb"/><rect x="1.3" y="13" width="2.2" height="1.6" fill="#bbb"/><rect x="5" y="13" width="2.2" height="1.6" fill="#bbb"/><rect x="8.6" y="9.8" width="2.6" height="5" fill="#5bb8e0"/></svg>
<svg class="a" style="left:1181px;top:384px" width="17" height="16" viewBox="0 0 17 16"><path d="M8.5 5.5 V7.5 M4.5 9.5 V7.5 H12.5 V9.5" stroke="#888" stroke-width="1" fill="none"/><rect x="4.7" y="0.5" width="6.6" height="5" rx="1.3" fill="#f5b942"/><rect x="0.2" y="9.5" width="6.6" height="5" rx="1.3" fill="#f5b942"/><rect x="9.2" y="9.5" width="6.6" height="5" rx="1.3" fill="#f5b942"/></svg>
<svg class="a" style="left:1351px;top:384px" width="17" height="16" viewBox="0 0 17 16"><path d="M8.5 5.5 V7.5 M4.5 9.5 V7.5 H12.5 V9.5" stroke="#888" stroke-width="1" fill="none"/><rect x="4.7" y="0.5" width="6.6" height="5" rx="1.3" fill="#f5b942"/><rect x="0.2" y="9.5" width="6.6" height="5" rx="1.3" fill="#f5b942"/><rect x="9.2" y="9.5" width="6.6" height="5" rx="1.3" fill="#f5b942"/></svg>
<svg class="a" style="left:1522px;top:383px" width="16" height="17" viewBox="0 0 16 17"><circle cx="10.5" cy="3.5" r="3.3" fill="#e9b83c"/><rect x="7.3" y="7" width="6.7" height="3.4" fill="#b8922e"/><rect x="7.3" y="8" width="6.7" height="1.5" fill="#f6c343"/><rect x="0" y="10.3" width="14" height="6.5" fill="#b8922e"/><rect x="0" y="11.5" width="14" height="2" fill="#d9b050"/><rect x="0" y="14.7" width="14" height="1.8" fill="#f6c343"/></svg>
<div class="cell" style="left:301px;top:424px">1522</div>
<div class="cell" style="left:381px;top:424px">€10/min</div>
<div class="cell" style="left:531px;top:424px">€10/min</div>
<div class="cell" style="left:681px;top:424px">Subtitling #1 - GL (...</div>
<div class="cell" style="left:831px;top:424px">Audiovisual</div>
<div class="cell" style="left:931px;top:424px">Euro</div>
<div class="cell" style="left:1081px;top:424px">Min</div>
<div class="cell" style="left:1551px;top:424px">1</div>
<div class="cell" style="left:1631px;top:424px">10.00</div>
<div class="cell" style="left:1721px;top:424px">5.00</div>
<div class="cell" style="left:1811px;top:424px">9.00</div>
<div class="clip" style="left:1893px;top:413px;width:10px;height:37px"><div class="cell" style="left:8px;top:11px">0</div></div>
<svg class="a" style="left:10px;top:421px" width="16" height="16" viewBox="0 0 16 16"><path d="M0 4 L4 0 L8 4 L12 0 L16 4 L12 8 L16 12 L12 16 L8 12 L4 16 L0 12 L4 8Z" fill="#961a10"/><path d="M0 4 L4 0 L8 4 L12 0 L16 4 L13.5 6.5 Q8 5.5 2.5 8.5 L4 8Z" fill="#a8392c"/></svg>
<svg class="a" style="left:50px;top:421px" width="16" height="16" viewBox="0 0 16 16"><g transform="rotate(45 8 8)"><rect x="-2" y="5.2" width="3.2" height="5.6" rx="1" fill="#f2954e"/><rect x="1" y="5.2" width="3.2" height="5.6" fill="#d2d2d2"/><rect x="4.2" y="5.2" width="10.3" height="5.6" fill="#f39a4c"/><rect x="4.2" y="5.2" width="10.3" height="2" fill="#f4c04e"/><path d="M14.5 5.2 L18.6 8 L14.5 10.8Z" fill="#f5a860"/><path d="M17 6.9 L18.6 8 L17 9.1Z" fill="#e86a20"/></g></svg>
<svg class="a" style="left:91px;top:420px" width="17" height="17" viewBox="0 0 17 17"><circle cx="6.5" cy="6.2" r="4.9" fill="#7a7a7a" stroke="#f6c343" stroke-width="1.4"/><path d="M10.5 10.5 L14.5 14.5" stroke="#5bb8e0" stroke-width="3.2" stroke-linecap="round"/></svg>
<svg class="a" style="left:125px;top:421px" width="15" height="16" viewBox="0 0 15 16"><path d="M1 3 L9 0.5 L9 3.5 L11 3.5 L11 12 L14 12.5 L14 15.5 L1 15.5Z" fill="#d9d9d9"/><path d="M9 3.5 L9 14.5 L11 15.5 L11 3.5Z" fill="#bdbdbd"/></svg>
<svg class="a" style="left:170px;top:420px" width="17" height="17" viewBox="0 0 17 17"><rect x="0.7" y="0.7" width="9.5" height="13" rx="1.5" fill="none" stroke="#5bb8e0" stroke-width="1.3"/><path d="M6 2.8 H12 L15.8 6.6 V15.5 Q15.8 16.3 15 16.3 H6.8 Q6 16.3 6 15.5Z" fill="#5b5b5b" stroke="#5bb8e0" stroke-width="1.3"/><rect x="7.7" y="6.5" width="5.3" height="1.3" fill="#f6c343"/><rect x="7.7" y="9" width="6" height="1.3" fill="#c9a85a"/><rect x="7.7" y="11.4" width="6" height="1.3" fill="#f6c343"/><rect x="7.7" y="13.6" width="6" height="1.2" fill="#f6c343"/></svg>
<svg class="a" style="left:242px;top:421px" width="13" height="16" viewBox="0 0 13 16"><rect x="0" y="0" width="12.5" height="16" rx="1.5" fill="#111"/><rect x="1.2" y="1.7" width="10" height="3" fill="#e8e8e8"/><rect x="1.3" y="7" width="2.2" height="1.6" fill="#f6c343"/><rect x="5" y="7" width="2.2" height="1.6" fill="#bbb"/><rect x="8.6" y="7" width="2.5" height="1.6" fill="#bbb"/><rect x="1.3" y="10" width="2.2" height="1.6" fill="#bbb"/><rect x="5" y="10" width="2.2" height="1.6" fill="#bbb"/><rect x="1.3" y="13" width="2.2" height="1.6" fill="#bbb"/><rect x="5" y="13" width="2.2" height="1.6" fill="#bbb"/><rect x="8.6" y="9.8" width="2.6" height="5" fill="#5bb8e0"/></svg>
<svg class="a" style="left:1181px;top:421px" width="17" height="16" viewBox="0 0 17 16"><path d="M8.5 5.5 V7.5 M4.5 9.5 V7.5 H12.5 V9.5" stroke="#888" stroke-width="1" fill="none"/><rect x="4.7" y="0.5" width="6.6" height="5" rx="1.3" fill="#f5b942"/><rect x="0.2" y="9.5" width="6.6" height="5" rx="1.3" fill="#f5b942"/><rect x="9.2" y="9.5" width="6.6" height="5" rx="1.3" fill="#f5b942"/></svg>
<svg class="a" style="left:1351px;top:421px" width="17" height="16" viewBox="0 0 17 16"><path d="M8.5 5.5 V7.5 M4.5 9.5 V7.5 H12.5 V9.5" stroke="#888" stroke-width="1" fill="none"/><rect x="4.7" y="0.5" width="6.6" height="5" rx="1.3" fill="#f5b942"/><rect x="0.2" y="9.5" width="6.6" height="5" rx="1.3" fill="#f5b942"/><rect x="9.2" y="9.5" width="6.6" height="5" rx="1.3" fill="#f5b942"/></svg>
<svg class="a" style="left:1522px;top:420px" width="16" height="17" viewBox="0 0 16 17"><circle cx="10.5" cy="3.5" r="3.3" fill="#e9b83c"/><rect x="7.3" y="7" width="6.7" height="3.4" fill="#b8922e"/><rect x="7.3" y="8" width="6.7" height="1.5" fill="#f6c343"/><rect x="0" y="10.3" width="14" height="6.5" fill="#b8922e"/><rect x="0" y="11.5" width="14" height="2" fill="#d9b050"/><rect x="0" y="14.7" width="14" height="1.8" fill="#f6c343"/></svg>
<div class="cell" style="left:301px;top:461px">1523</div>
<div class="cell" style="left:381px;top:461px">€10/min</div>
<div class="cell" style="left:531px;top:461px">€10/min</div>
<div class="cell" style="left:681px;top:461px">Billing Product 1 - ...</div>
<div class="cell" style="left:831px;top:461px">Audiovisual</div>
<div class="cell" style="left:931px;top:461px">Euro</div>
<div class="cell" style="left:1081px;top:461px">Min</div>
<div class="cell" style="left:1551px;top:461px">1</div>
<div class="cell" style="left:1631px;top:461px">10.00</div>
<div class="cell" style="left:1721px;top:461px">10.00</div>
<div class="cell" style="left:1811px;top:461px">10.00</div>
<div class="clip" style="left:1893px;top:450px;width:10px;height:37px"><div class="cell" style="left:8px;top:11px">0</div></div>
<svg class="a" style="left:10px;top:458px" width="16" height="16" viewBox="0 0 16 16"><path d="M0 4 L4 0 L8 4 L12 0 L16 4 L12 8 L16 12 L12 16 L8 12 L4 16 L0 12 L4 8Z" fill="#961a10"/><path d="M0 4 L4 0 L8 4 L12 0 L16 4 L13.5 6.5 Q8 5.5 2.5 8.5 L4 8Z" fill="#a8392c"/></svg>
<svg class="a" style="left:50px;top:458px" width="16" height="16" viewBox="0 0 16 16"><g transform="rotate(45 8 8)"><rect x="-2" y="5.2" width="3.2" height="5.6" rx="1" fill="#f2954e"/><rect x="1" y="5.2" width="3.2" height="5.6" fill="#d2d2d2"/><rect x="4.2" y="5.2" width="10.3" height="5.6" fill="#f39a4c"/><rect x="4.2" y="5.2" width="10.3" height="2" fill="#f4c04e"/><path d="M14.5 5.2 L18.6 8 L14.5 10.8Z" fill="#f5a860"/><path d="M17 6.9 L18.6 8 L17 9.1Z" fill="#e86a20"/></g></svg>
<svg class="a" style="left:91px;top:457px" width="17" height="17" viewBox="0 0 17 17"><circle cx="6.5" cy="6.2" r="4.9" fill="#7a7a7a" stroke="#f6c343" stroke-width="1.4"/><path d="M10.5 10.5 L14.5 14.5" stroke="#5bb8e0" stroke-width="3.2" stroke-linecap="round"/></svg>
<svg class="a" style="left:125px;top:458px" width="15" height="16" viewBox="0 0 15 16"><path d="M1 3 L9 0.5 L9 3.5 L11 3.5 L11 12 L14 12.5 L14 15.5 L1 15.5Z" fill="#d9d9d9"/><path d="M9 3.5 L9 14.5 L11 15.5 L11 3.5Z" fill="#bdbdbd"/></svg>
<svg class="a" style="left:170px;top:457px" width="17" height="17" viewBox="0 0 17 17"><rect x="0.7" y="0.7" width="9.5" height="13" rx="1.5" fill="none" stroke="#5bb8e0" stroke-width="1.3"/><path d="M6 2.8 H12 L15.8 6.6 V15.5 Q15.8 16.3 15 16.3 H6.8 Q6 16.3 6 15.5Z" fill="#4b4b4b" stroke="#5bb8e0" stroke-width="1.3"/><rect x="7.7" y="6.5" width="5.3" height="1.3" fill="#f6c343"/><rect x="7.7" y="9" width="6" height="1.3" fill="#c9a85a"/><rect x="7.7" y="11.4" width="6" height="1.3" fill="#f6c343"/><rect x="7.7" y="13.6" width="6" height="1.2" fill="#f6c343"/></svg>
<svg class="a" style="left:242px;top:458px" width="13" height="16" viewBox="0 0 13 16"><rect x="0" y="0" width="12.5" height="16" rx="1.5" fill="#111"/><rect x="1.2" y="1.7" width="10" height="3" fill="#e8e8e8"/><rect x="1.3" y="7" width="2.2" height="1.6" fill="#f6c343"/><rect x="5" y="7" width="2.2" height="1.6" fill="#bbb"/><rect x="8.6" y="7" width="2.5" height="1.6" fill="#bbb"/><rect x="1.3" y="10" width="2.2" height="1.6" fill="#bbb"/><rect x="5" y="10" width="2.2" height="1.6" fill="#bbb"/><rect x="1.3" y="13" width="2.2" height="1.6" fill="#bbb"/><rect x="5" y="13" width="2.2" height="1.6" fill="#bbb"/><rect x="8.6" y="9.8" width="2.6" height="5" fill="#5bb8e0"/></svg>
<svg class="a" style="left:1181px;top:458px" width="17" height="16" viewBox="0 0 17 16"><path d="M8.5 5.5 V7.5 M4.5 9.5 V7.5 H12.5 V9.5" stroke="#888" stroke-width="1" fill="none"/><rect x="4.7" y="0.5" width="6.6" height="5" rx="1.3" fill="#f5b942"/><rect x="0.2" y="9.5" width="6.6" height="5" rx="1.3" fill="#f5b942"/><rect x="9.2" y="9.5" width="6.6" height="5" rx="1.3" fill="#f5b942"/></svg>
<svg class="a" style="left:1351px;top:458px" width="17" height="16" viewBox="0 0 17 16"><path d="M8.5 5.5 V7.5 M4.5 9.5 V7.5 H12.5 V9.5" stroke="#888" stroke-width="1" fill="none"/><rect x="4.7" y="0.5" width="6.6" height="5" rx="1.3" fill="#f5b942"/><rect x="0.2" y="9.5" width="6.6" height="5" rx="1.3" fill="#f5b942"/><rect x="9.2" y="9.5" width="6.6" height="5" rx="1.3" fill="#f5b942"/></svg>
<svg class="a" style="left:1522px;top:457px" width="16" height="17" viewBox="0 0 16 17"><circle cx="10.5" cy="3.5" r="3.3" fill="#e9b83c"/><rect x="7.3" y="7" width="6.7" height="3.4" fill="#b8922e"/><rect x="7.3" y="8" width="6.7" height="1.5" fill="#f6c343"/><rect x="0" y="10.3" width="14" height="6.5" fill="#b8922e"/><rect x="0" y="11.5" width="14" height="2" fill="#d9b050"/><rect x="0" y="14.7" width="14" height="1.8" fill="#f6c343"/></svg>
<div class="cell" style="left:301px;top:498px">1594</div>
<div class="cell" style="left:381px;top:498px">€10/min (FR only)</div>
<div class="cell" style="left:531px;top:498px">€10/min (FR only)</div>
<div class="cell" style="left:681px;top:498px">1st translation - GL ...</div>
<div class="cell" style="left:831px;top:498px">Audiovisual</div>
<div class="cell" style="left:931px;top:498px">Euro</div>
<div class="cell" style="left:1081px;top:498px">Min</div>
<div class="cell" style="left:1381px;top:498px">French</div>
<div class="cell" style="left:1551px;top:498px">1</div>
<div class="cell" style="left:1631px;top:498px">10.00</div>
<div class="cell" style="left:1721px;top:498px">10.00</div>
<div class="cell" style="left:1811px;top:498px">10.00</div>
<div class="clip" style="left:1893px;top:487px;width:10px;height:37px"><div class="cell" style="left:8px;top:11px">0</div></div>
<svg class="a" style="left:10px;top:495px" width="16" height="16" viewBox="0 0 16 16"><path d="M0 4 L4 0 L8 4 L12 0 L16 4 L12 8 L16 12 L12 16 L8 12 L4 16 L0 12 L4 8Z" fill="#961a10"/><path d="M0 4 L4 0 L8 4 L12 0 L16 4 L13.5 6.5 Q8 5.5 2.5 8.5 L4 8Z" fill="#a8392c"/></svg>
<svg class="a" style="left:50px;top:495px" width="16" height="16" viewBox="0 0 16 16"><g transform="rotate(45 8 8)"><rect x="-2" y="5.2" width="3.2" height="5.6" rx="1" fill="#f2954e"/><rect x="1" y="5.2" width="3.2" height="5.6" fill="#d2d2d2"/><rect x="4.2" y="5.2" width="10.3" height="5.6" fill="#f39a4c"/><rect x="4.2" y="5.2" width="10.3" height="2" fill="#f4c04e"/><path d="M14.5 5.2 L18.6 8 L14.5 10.8Z" fill="#f5a860"/><path d="M17 6.9 L18.6 8 L17 9.1Z" fill="#e86a20"/></g></svg>
<svg class="a" style="left:91px;top:494px" width="17" height="17" viewBox="0 0 17 17"><circle cx="6.5" cy="6.2" r="4.9" fill="#7a7a7a" stroke="#f6c343" stroke-width="1.4"/><path d="M10.5 10.5 L14.5 14.5" stroke="#5bb8e0" stroke-width="3.2" stroke-linecap="round"/></svg>
<svg class="a" style="left:125px;top:495px" width="15" height="16" viewBox="0 0 15 16"><path d="M1 3 L9 0.5 L9 3.5 L11 3.5 L11 12 L14 12.5 L14 15.5 L1 15.5Z" fill="#d9d9d9"/><path d="M9 3.5 L9 14.5 L11 15.5 L11 3.5Z" fill="#bdbdbd"/></svg>
<svg class="a" style="left:170px;top:494px" width="17" height="17" viewBox="0 0 17 17"><rect x="0.7" y="0.7" width="9.5" height="13" rx="1.5" fill="none" stroke="#5bb8e0" stroke-width="1.3"/><path d="M6 2.8 H12 L15.8 6.6 V15.5 Q15.8 16.3 15 16.3 H6.8 Q6 16.3 6 15.5Z" fill="#5b5b5b" stroke="#5bb8e0" stroke-width="1.3"/><rect x="7.7" y="6.5" width="5.3" height="1.3" fill="#f6c343"/><rect x="7.7" y="9" width="6" height="1.3" fill="#c9a85a"/><rect x="7.7" y="11.4" width="6" height="1.3" fill="#f6c343"/><rect x="7.7" y="13.6" width="6" height="1.2" fill="#f6c343"/></svg>
<svg class="a" style="left:242px;top:495px" width="13" height="16" viewBox="0 0 13 16"><rect x="0" y="0" width="12.5" height="16" rx="1.5" fill="#111"/><rect x="1.2" y="1.7" width="10" height="3" fill="#e8e8e8"/><rect x="1.3" y="7" width="2.2" height="1.6" fill="#f6c343"/><rect x="5" y="7" width="2.2" height="1.6" fill="#bbb"/><rect x="8.6" y="7" width="2.5" height="1.6" fill="#bbb"/><rect x="1.3" y="10" width="2.2" height="1.6" fill="#bbb"/><rect x="5" y="10" width="2.2" height="1.6" fill="#bbb"/><rect x="1.3" y="13" width="2.2" height="1.6" fill="#bbb"/><rect x="5" y="13" width="2.2" height="1.6" fill="#bbb"/><rect x="8.6" y="9.8" width="2.6" height="5" fill="#5bb8e0"/></svg>
<svg class="a" style="left:1181px;top:495px" width="17" height="16" viewBox="0 0 17 16"><path d="M8.5 5.5 V7.5 M4.5 9.5 V7.5 H12.5 V9.5" stroke="#888" stroke-width="1" fill="none"/><rect x="4.7" y="0.5" width="6.6" height="5" rx="1.3" fill="#f5b942"/><rect x="0.2" y="9.5" width="6.6" height="5" rx="1.3" fill="#f5b942"/><rect x="9.2" y="9.5" width="6.6" height="5" rx="1.3" fill="#f5b942"/></svg>
<svg class="a" style="left:1351px;top:495px" width="17" height="16" viewBox="0 0 17 16"><path d="M8.5 5.5 V7.5 M4.5 9.5 V7.5 H12.5 V9.5" stroke="#888" stroke-width="1" fill="none"/><rect x="4.7" y="0.5" width="6.6" height="5" rx="1.3" fill="#f5b942"/><rect x="0.2" y="9.5" width="6.6" height="5" rx="1.3" fill="#f5b942"/><rect x="9.2" y="9.5" width="6.6" height="5" rx="1.3" fill="#f5b942"/></svg>
<svg class="a" style="left:1522px;top:494px" width="16" height="17" viewBox="0 0 16 17"><circle cx="10.5" cy="3.5" r="3.3" fill="#e9b83c"/><rect x="7.3" y="7" width="6.7" height="3.4" fill="#b8922e"/><rect x="7.3" y="8" width="6.7" height="1.5" fill="#f6c343"/><rect x="0" y="10.3" width="14" height="6.5" fill="#b8922e"/><rect x="0" y="11.5" width="14" height="2" fill="#d9b050"/><rect x="0" y="14.7" width="14" height="1.8" fill="#f6c343"/></svg>
<div class="cell" style="left:301px;top:535px">1595</div>
<div class="cell" style="left:381px;top:535px">€10/min (unit repor...</div>
<div class="cell" style="left:531px;top:535px">€10/min (unit repor...</div>
<div class="cell" style="left:681px;top:535px">Subtitling #1 - GL (...</div>
<div class="cell" style="left:831px;top:535px">Audiovisual</div>
<div class="cell" style="left:931px;top:535px">Euro</div>
<div class="cell" style="left:1081px;top:535px">Hours</div>
<div class="cell" style="left:1211px;top:535px">Greek</div>
<div class="cell" style="left:1381px;top:535px">Greek</div>
<div class="cell" style="left:1551px;top:535px">1</div>
<div class="cell" style="left:1631px;top:535px">10.00</div>
<div class="cell" style="left:1721px;top:535px">5.00</div>
<div class="cell" style="left:1811px;top:535px">9.00</div>
<div class="clip" style="left:1893px;top:524px;width:10px;height:37px"><div class="cell" style="left:8px;top:11px">0</div></div>
<svg class="a" style="left:10px;top:532px" width="16" height="16" viewBox="0 0 16 16"><path d="M0 4 L4 0 L8 4 L12 0 L16 4 L12 8 L16 12 L12 16 L8 12 L4 16 L0 12 L4 8Z" fill="#961a10"/><path d="M0 4 L4 0 L8 4 L12 0 L16 4 L13.5 6.5 Q8 5.5 2.5 8.5 L4 8Z" fill="#a8392c"/></svg>
<svg class="a" style="left:50px;top:532px" width="16" height="16" viewBox="0 0 16 16"><g transform="rotate(45 8 8)"><rect x="-2" y="5.2" width="3.2" height="5.6" rx="1" fill="#f2954e"/><rect x="1" y="5.2" width="3.2" height="5.6" fill="#d2d2d2"/><rect x="4.2" y="5.2" width="10.3" height="5.6" fill="#f39a4c"/><rect x="4.2" y="5.2" width="10.3" height="2" fill="#f4c04e"/><path d="M14.5 5.2 L18.6 8 L14.5 10.8Z" fill="#f5a860"/><path d="M17 6.9 L18.6 8 L17 9.1Z" fill="#e86a20"/></g></svg>
<svg class="a" style="left:91px;top:531px" width="17" height="17" viewBox="0 0 17 17"><circle cx="6.5" cy="6.2" r="4.9" fill="#7a7a7a" stroke="#f6c343" stroke-width="1.4"/><path d="M10.5 10.5 L14.5 14.5" stroke="#5bb8e0" stroke-width="3.2" stroke-linecap="round"/></svg>
<svg class="a" style="left:125px;top:532px" width="15" height="16" viewBox="0 0 15 16"><path d="M1 3 L9 0.5 L9 3.5 L11 3.5 L11 12 L14 12.5 L14 15.5 L1 15.5Z" fill="#d9d9d9"/><path d="M9 3.5 L9 14.5 L11 15.5 L11 3.5Z" fill="#bdbdbd"/></svg>
<svg class="a" style="left:170px;top:531px" width="17" height="17" viewBox="0 0 17 17"><rect x="0.7" y="0.7" width="9.5" height="13" rx="1.5" fill="none" stroke="#5bb8e0" stroke-width="1.3"/><path d="M6 2.8 H12 L15.8 6.6 V15.5 Q15.8 16.3 15 16.3 H6.8 Q6 16.3 6 15.5Z" fill="#4b4b4b" stroke="#5bb8e0" stroke-width="1.3"/><rect x="7.7" y="6.5" width="5.3" height="1.3" fill="#f6c343"/><rect x="7.7" y="9" width="6" height="1.3" fill="#c9a85a"/><rect x="7.7" y="11.4" width="6" height="1.3" fill="#f6c343"/><rect x="7.7" y="13.6" width="6" height="1.2" fill="#f6c343"/></svg>
<svg class="a" style="left:242px;top:532px" width="13" height="16" viewBox="0 0 13 16"><rect x="0" y="0" width="12.5" height="16" rx="1.5" fill="#111"/><rect x="1.2" y="1.7" width="10" height="3" fill="#e8e8e8"/><rect x="1.3" y="7" width="2.2" height="1.6" fill="#f6c343"/><rect x="5" y="7" width="2.2" height="1.6" fill="#bbb"/><rect x="8.6" y="7" width="2.5" height="1.6" fill="#bbb"/><rect x="1.3" y="10" width="2.2" height="1.6" fill="#bbb"/><rect x="5" y="10" width="2.2" height="1.6" fill="#bbb"/><rect x="1.3" y="13" width="2.2" height="1.6" fill="#bbb"/><rect x="5" y="13" width="2.2" height="1.6" fill="#bbb"/><rect x="8.6" y="9.8" width="2.6" height="5" fill="#5bb8e0"/></svg>
<svg class="a" style="left:1181px;top:532px" width="17" height="16" viewBox="0 0 17 16"><path d="M8.5 5.5 V7.5 M4.5 9.5 V7.5 H12.5 V9.5" stroke="#888" stroke-width="1" fill="none"/><rect x="4.7" y="0.5" width="6.6" height="5" rx="1.3" fill="#f5b942"/><rect x="0.2" y="9.5" width="6.6" height="5" rx="1.3" fill="#f5b942"/><rect x="9.2" y="9.5" width="6.6" height="5" rx="1.3" fill="#f5b942"/></svg>
<svg class="a" style="left:1351px;top:532px" width="17" height="16" viewBox="0 0 17 16"><path d="M8.5 5.5 V7.5 M4.5 9.5 V7.5 H12.5 V9.5" stroke="#888" stroke-width="1" fill="none"/><rect x="4.7" y="0.5" width="6.6" height="5" rx="1.3" fill="#f5b942"/><rect x="0.2" y="9.5" width="6.6" height="5" rx="1.3" fill="#f5b942"/><rect x="9.2" y="9.5" width="6.6" height="5" rx="1.3" fill="#f5b942"/></svg>
<svg class="a" style="left:1522px;top:531px" width="16" height="17" viewBox="0 0 16 17"><circle cx="10.5" cy="3.5" r="3.3" fill="#e9b83c"/><rect x="7.3" y="7" width="6.7" height="3.4" fill="#b8922e"/><rect x="7.3" y="8" width="6.7" height="1.5" fill="#f6c343"/><rect x="0" y="10.3" width="14" height="6.5" fill="#b8922e"/><rect x="0" y="11.5" width="14" height="2" fill="#d9b050"/><rect x="0" y="14.7" width="14" height="1.8" fill="#f6c343"/></svg>
<div class="cell" style="left:301px;top:572px">1526</div>
<div class="cell" style="left:381px;top:572px">€5/min</div>
<div class="cell" style="left:531px;top:572px">€5/min</div>
<div class="cell" style="left:681px;top:572px">1st translation - GL ...</div>
<div class="cell" style="left:831px;top:572px">Audiovisual</div>
<div class="cell" style="left:931px;top:572px">Euro</div>
<div class="cell" style="left:1081px;top:572px">Min</div>
<div class="cell" style="left:1551px;top:572px">1</div>
<div class="cell" style="left:1631px;top:572px">5.00</div>
<div class="cell" style="left:1721px;top:572px">5.00</div>
<div class="cell" style="left:1811px;top:572px">5.00</div>
<div class="clip" style="left:1893px;top:561px;width:10px;height:37px"><div class="cell" style="left:8px;top:11px">0</div></div>
<svg class="a" style="left:10px;top:569px" width="16" height="16" viewBox="0 0 16 16"><path d="M0 4 L4 0 L8 4 L12 0 L16 4 L12 8 L16 12 L12 16 L8 12 L4 16 L0 12 L4 8Z" fill="#961a10"/><path d="M0 4 L4 0 L8 4 L12 0 L16 4 L13.5 6.5 Q8 5.5 2.5 8.5 L4 8Z" fill="#a8392c"/></svg>
<svg class="a" style="left:50px;top:569px" width="16" height="16" viewBox="0 0 16 16"><g transform="rotate(45 8 8)"><rect x="-2" y="5.2" width="3.2" height="5.6" rx="1" fill="#f2954e"/><rect x="1" y="5.2" width="3.2" height="5.6" fill="#d2d2d2"/><rect x="4.2" y="5.2" width="10.3" height="5.6" fill="#f39a4c"/><rect x="4.2" y="5.2" width="10.3" height="2" fill="#f4c04e"/><path d="M14.5 5.2 L18.6 8 L14.5 10.8Z" fill="#f5a860"/><path d="M17 6.9 L18.6 8 L17 9.1Z" fill="#e86a20"/></g></svg>
<svg class="a" style="left:91px;top:568px" width="17" height="17" viewBox="0 0 17 17"><circle cx="6.5" cy="6.2" r="4.9" fill="#7a7a7a" stroke="#f6c343" stroke-width="1.4"/><path d="M10.5 10.5 L14.5 14.5" stroke="#5bb8e0" stroke-width="3.2" stroke-linecap="round"/></svg>
<svg class="a" style="left:125px;top:569px" width="15" height="16" viewBox="0 0 15 16"><path d="M1 3 L9 0.5 L9 3.5 L11 3.5 L11 12 L14 12.5 L14 15.5 L1 15.5Z" fill="#d9d9d9"/><path d="M9 3.5 L9 14.5 L11 15.5 L11 3.5Z" fill="#bdbdbd"/></svg>
<svg class="a" style="left:170px;top:568px" width="17" height="17" viewBox="0 0 17 17"><rect x="0.7" y="0.7" width="9.5" height="13" rx="1.5" fill="none" stroke="#5bb8e0" stroke-width="1.3"/><path d="M6 2.8 H12 L15.8 6.6 V15.5 Q15.8 16.3 15 16.3 H6.8 Q6 16.3 6 15.5Z" fill="#5b5b5b" stroke="#5bb8e0" stroke-width="1.3"/><rect x="7.7" y="6.5" width="5.3" height="1.3" fill="#f6c343"/><rect x="7.7" y="9" width="6" height="1.3" fill="#c9a85a"/><rect x="7.7" y="11.4" width="6" height="1.3" fill="#f6c343"/><rect x="7.7" y="13.6" width="6" height="1.2" fill="#f6c343"/></svg>
<svg class="a" style="left:242px;top:569px" width="13" height="16" viewBox="0 0 13 16"><rect x="0" y="0" width="12.5" height="16" rx="1.5" fill="#111"/><rect x="1.2" y="1.7" width="10" height="3" fill="#e8e8e8"/><rect x="1.3" y="7" width="2.2" height="1.6" fill="#f6c343"/><rect x="5" y="7" width="2.2" height="1.6" fill="#bbb"/><rect x="8.6" y="7" width="2.5" height="1.6" fill="#bbb"/><rect x="1.3" y="10" width="2.2" height="1.6" fill="#bbb"/><rect x="5" y="10" width="2.2" height="1.6" fill="#bbb"/><rect x="1.3" y="13" width="2.2" height="1.6" fill="#bbb"/><rect x="5" y="13" width="2.2" height="1.6" fill="#bbb"/><rect x="8.6" y="9.8" width="2.6" height="5" fill="#5bb8e0"/></svg>
<svg class="a" style="left:1181px;top:569px" width="17" height="16" viewBox="0 0 17 16"><path d="M8.5 5.5 V7.5 M4.5 9.5 V7.5 H12.5 V9.5" stroke="#888" stroke-width="1" fill="none"/><rect x="4.7" y="0.5" width="6.6" height="5" rx="1.3" fill="#f5b942"/><rect x="0.2" y="9.5" width="6.6" height="5" rx="1.3" fill="#f5b942"/><rect x="9.2" y="9.5" width="6.6" height="5" rx="1.3" fill="#f5b942"/></svg>
<svg class="a" style="left:1351px;top:569px" width="17" height="16" viewBox="0 0 17 16"><path d="M8.5 5.5 V7.5 M4.5 9.5 V7.5 H12.5 V9.5" stroke="#888" stroke-width="1" fill="none"/><rect x="4.7" y="0.5" width="6.6" height="5" rx="1.3" fill="#f5b942"/><rect x="0.2" y="9.5" width="6.6" height="5" rx="1.3" fill="#f5b942"/><rect x="9.2" y="9.5" width="6.6" height="5" rx="1.3" fill="#f5b942"/></svg>
<svg class="a" style="left:1522px;top:568px" width="16" height="17" viewBox="0 0 16 17"><circle cx="10.5" cy="3.5" r="3.3" fill="#e9b83c"/><rect x="7.3" y="7" width="6.7" height="3.4" fill="#b8922e"/><rect x="7.3" y="8" width="6.7" height="1.5" fill="#f6c343"/><rect x="0" y="10.3" width="14" height="6.5" fill="#b8922e"/><rect x="0" y="11.5" width="14" height="2" fill="#d9b050"/><rect x="0" y="14.7" width="14" height="1.8" fill="#f6c343"/></svg>
<div class="cell" style="left:301px;top:609px">1453</div>
<div class="cell" style="left:381px;top:609px">1st</div>
<div class="cell" style="left:531px;top:609px">1st</div>
<div class="cell" style="left:681px;top:609px">Burn in - GL (40)</div>
<div class="cell" style="left:831px;top:609px">Audiovisual</div>
<div class="cell" style="left:931px;top:609px">Euro</div>
<div class="cell" style="left:1081px;top:609px">Min</div>
<div class="cell" style="left:1211px;top:609px">Swedish</div>
<div class="cell" style="left:1551px;top:609px">1</div>
<div class="cell" style="left:1631px;top:609px">100.00</div>
<div class="cell" style="left:1721px;top:609px">100.00</div>
<div class="cell" style="left:1811px;top:609px">100.00</div>
<div class="clip" style="left:1893px;top:598px;width:10px;height:37px"><div class="cell" style="left:8px;top:11px">0</div></div>
<svg class="a" style="left:10px;top:606px" width="16" height="16" viewBox="0 0 16 16"><path d="M0 4 L4 0 L8 4 L12 0 L16 4 L12 8 L16 12 L12 16 L8 12 L4 16 L0 12 L4 8Z" fill="#961a10"/><path d="M0 4 L4 0 L8 4 L12 0 L16 4 L13.5 6.5 Q8 5.5 2.5 8.5 L4 8Z" fill="#a8392c"/></svg>
<svg class="a" style="left:50px;top:606px" width="16" height="16" viewBox="0 0 16 16"><g transform="rotate(45 8 8)"><rect x="-2" y="5.2" width="3.2" height="5.6" rx="1" fill="#f2954e"/><rect x="1" y="5.2" width="3.2" height="5.6" fill="#d2d2d2"/><rect x="4.2" y="5.2" width="10.3" height="5.6" fill="#f39a4c"/><rect x="4.2" y="5.2" width="10.3" height="2" fill="#f4c04e"/><path d="M14.5 5.2 L18.6 8 L14.5 10.8Z" fill="#f5a860"/><path d="M17 6.9 L18.6 8 L17 9.1Z" fill="#e86a20"/></g></svg>
<svg class="a" style="left:91px;top:605px" width="17" height="17" viewBox="0 0 17 17"><circle cx="6.5" cy="6.2" r="4.9" fill="#7a7a7a" stroke="#f6c343" stroke-width="1.4"/><path d="M10.5 10.5 L14.5 14.5" stroke="#5bb8e0" stroke-width="3.2" stroke-linecap="round"/></svg>
<svg class="a" style="left:125px;top:606px" width="15" height="16" viewBox="0 0 15 16"><path d="M1 3 L9 0.5 L9 3.5 L11 3.5 L11 12 L14 12.5 L14 15.5 L1 15.5Z" fill="#d9d9d9"/><path d="M9 3.5 L9 14.5 L11 15.5 L11 3.5Z" fill="#bdbdbd"/></svg>
<svg class="a" style="left:170px;top:605px" width="17" height="17" viewBox="0 0 17 17"><rect x="0.7" y="0.7" width="9.5" height="13" rx="1.5" fill="none" stroke="#5bb8e0" stroke-width="1.3"/><path d="M6 2.8 H12 L15.8 6.6 V15.5 Q15.8 16.3 15 16.3 H6.8 Q6 16.3 6 15.5Z" fill="#4b4b4b" stroke="#5bb8e0" stroke-width="1.3"/><rect x="7.7" y="6.5" width="5.3" height="1.3" fill="#f6c343"/><rect x="7.7" y="9" width="6" height="1.3" fill="#c9a85a"/><rect x="7.7" y="11.4" width="6" height="1.3" fill="#f6c343"/><rect x="7.7" y="13.6" width="6" height="1.2" fill="#f6c343"/></svg>
<svg class="a" style="left:242px;top:606px" width="13" height="16" viewBox="0 0 13 16"><rect x="0" y="0" width="12.5" height="16" rx="1.5" fill="#111"/><rect x="1.2" y="1.7" width="10" height="3" fill="#e8e8e8"/><rect x="1.3" y="7" width="2.2" height="1.6" fill="#f6c343"/><rect x="5" y="7" width="2.2" height="1.6" fill="#bbb"/><rect x="8.6" y="7" width="2.5" height="1.6" fill="#bbb"/><rect x="1.3" y="10" width="2.2" height="1.6" fill="#bbb"/><rect x="5" y="10" width="2.2" height="1.6" fill="#bbb"/><rect x="1.3" y="13" width="2.2" height="1.6" fill="#bbb"/><rect x="5" y="13" width="2.2" height="1.6" fill="#bbb"/><rect x="8.6" y="9.8" width="2.6" height="5" fill="#5bb8e0"/></svg>
<svg class="a" style="left:1181px;top:606px" width="17" height="16" viewBox="0 0 17 16"><path d="M8.5 5.5 V7.5 M4.5 9.5 V7.5 H12.5 V9.5" stroke="#888" stroke-width="1" fill="none"/><rect x="4.7" y="0.5" width="6.6" height="5" rx="1.3" fill="#f5b942"/><rect x="0.2" y="9.5" width="6.6" height="5" rx="1.3" fill="#f5b942"/><rect x="9.2" y="9.5" width="6.6" height="5" rx="1.3" fill="#f5b942"/></svg>
<svg class="a" style="left:1351px;top:606px" width="17" height="16" viewBox="0 0 17 16"><path d="M8.5 5.5 V7.5 M4.5 9.5 V7.5 H12.5 V9.5" stroke="#888" stroke-width="1" fill="none"/><rect x="4.7" y="0.5" width="6.6" height="5" rx="1.3" fill="#f5b942"/><rect x="0.2" y="9.5" width="6.6" height="5" rx="1.3" fill="#f5b942"/><rect x="9.2" y="9.5" width="6.6" height="5" rx="1.3" fill="#f5b942"/></svg>
<svg class="a" style="left:1522px;top:605px" width="16" height="17" viewBox="0 0 16 17"><circle cx="10.5" cy="3.5" r="3.3" fill="#e9b83c"/><rect x="7.3" y="7" width="6.7" height="3.4" fill="#b8922e"/><rect x="7.3" y="8" width="6.7" height="1.5" fill="#f6c343"/><rect x="0" y="10.3" width="14" height="6.5" fill="#b8922e"/><rect x="0" y="11.5" width="14" height="2" fill="#d9b050"/><rect x="0" y="14.7" width="14" height="1.8" fill="#f6c343"/></svg>
<div class="cell" style="left:301px;top:646px">1477</div>
<div class="cell" style="left:381px;top:646px">A price list with a re...</div>
<div class="cell" style="left:531px;top:646px">A price list with a re...</div>
<div class="cell" style="left:681px;top:646px">A product with a re...</div>
<div class="cell" style="left:831px;top:646px">Audiovisual</div>
<div class="cell" style="left:931px;top:646px">Euro</div>
<div class="cell" style="left:1081px;top:646px">Min</div>
<div class="cell" style="left:1551px;top:646px">1</div>
<div class="cell" style="left:1631px;top:646px">-3.00</div>
<div class="cell" style="left:1721px;top:646px">-3.00</div>
<div class="cell" style="left:1811px;top:646px">-3.00</div>
<div class="clip" style="left:1893px;top:635px;width:10px;height:37px"><div class="cell" style="left:8px;top:11px">2</div></div>
<svg class="a" style="left:10px;top:643px" width="16" height="16" viewBox="0 0 16 16"><path d="M0 4 L4 0 L8 4 L12 0 L16 4 L12 8 L16 12 L12 16 L8 12 L4 16 L0 12 L4 8Z" fill="#961a10"/><path d="M0 4 L4 0 L8 4 L12 0 L16 4 L13.5 6.5 Q8 5.5 2.5 8.5 L4 8Z" fill="#a8392c"/></svg>
<svg class="a" style="left:50px;top:643px" width="16" height="16" viewBox="0 0 16 16"><g transform="rotate(45 8 8)"><rect x="-2" y="5.2" width="3.2" height="5.6" rx="1" fill="#f2954e"/><rect x="1" y="5.2" width="3.2" height="5.6" fill="#d2d2d2"/><rect x="4.2" y="5.2" width="10.3" height="5.6" fill="#f39a4c"/><rect x="4.2" y="5.2" width="10.3" height="2" fill="#f4c04e"/><path d="M14.5 5.2 L18.6 8 L14.5 10.8Z" fill="#f5a860"/><path d="M17 6.9 L18.6 8 L17 9.1Z" fill="#e86a20"/></g></svg>
<svg class="a" style="left:91px;top:642px" width="17" height="17" viewBox="0 0 17 17"><circle cx="6.5" cy="6.2" r="4.9" fill="#7a7a7a" stroke="#f6c343" stroke-width="1.4"/><path d="M10.5 10.5 L14.5 14.5" stroke="#5bb8e0" stroke-width="3.2" stroke-linecap="round"/></svg>
<svg class="a" style="left:125px;top:643px" width="15" height="16" viewBox="0 0 15 16"><path d="M1 3 L9 0.5 L9 3.5 L11 3.5 L11 12 L14 12.5 L14 15.5 L1 15.5Z" fill="#d9d9d9"/><path d="M9 3.5 L9 14.5 L11 15.5 L11 3.5Z" fill="#bdbdbd"/></svg>
<svg class="a" style="left:170px;top:642px" width="17" height="17" viewBox="0 0 17 17"><rect x="0.7" y="0.7" width="9.5" height="13" rx="1.5" fill="none" stroke="#5bb8e0" stroke-width="1.3"/><path d="M6 2.8 H12 L15.8 6.6 V15.5 Q15.8 16.3 15 16.3 H6.8 Q6 16.3 6 15.5Z" fill="#5b5b5b" stroke="#5bb8e0" stroke-width="1.3"/><rect x="7.7" y="6.5" width="5.3" height="1.3" fill="#f6c343"/><rect x="7.7" y="9" width="6" height="1.3" fill="#c9a85a"/><rect x="7.7" y="11.4" width="6" height="1.3" fill="#f6c343"/><rect x="7.7" y="13.6" width="6" height="1.2" fill="#f6c343"/></svg>
<svg class="a" style="left:242px;top:643px" width="13" height="16" viewBox="0 0 13 16"><rect x="0" y="0" width="12.5" height="16" rx="1.5" fill="#111"/><rect x="1.2" y="1.7" width="10" height="3" fill="#e8e8e8"/><rect x="1.3" y="7" width="2.2" height="1.6" fill="#f6c343"/><rect x="5" y="7" width="2.2" height="1.6" fill="#bbb"/><rect x="8.6" y="7" width="2.5" height="1.6" fill="#bbb"/><rect x="1.3" y="10" width="2.2" height="1.6" fill="#bbb"/><rect x="5" y="10" width="2.2" height="1.6" fill="#bbb"/><rect x="1.3" y="13" width="2.2" height="1.6" fill="#bbb"/><rect x="5" y="13" width="2.2" height="1.6" fill="#bbb"/><rect x="8.6" y="9.8" width="2.6" height="5" fill="#5bb8e0"/></svg>
<svg class="a" style="left:1181px;top:643px" width="17" height="16" viewBox="0 0 17 16"><path d="M8.5 5.5 V7.5 M4.5 9.5 V7.5 H12.5 V9.5" stroke="#888" stroke-width="1" fill="none"/><rect x="4.7" y="0.5" width="6.6" height="5" rx="1.3" fill="#f5b942"/><rect x="0.2" y="9.5" width="6.6" height="5" rx="1.3" fill="#f5b942"/><rect x="9.2" y="9.5" width="6.6" height="5" rx="1.3" fill="#f5b942"/></svg>
<svg class="a" style="left:1351px;top:643px" width="17" height="16" viewBox="0 0 17 16"><path d="M8.5 5.5 V7.5 M4.5 9.5 V7.5 H12.5 V9.5" stroke="#888" stroke-width="1" fill="none"/><rect x="4.7" y="0.5" width="6.6" height="5" rx="1.3" fill="#f5b942"/><rect x="0.2" y="9.5" width="6.6" height="5" rx="1.3" fill="#f5b942"/><rect x="9.2" y="9.5" width="6.6" height="5" rx="1.3" fill="#f5b942"/></svg>
<svg class="a" style="left:1522px;top:642px" width="16" height="17" viewBox="0 0 16 17"><circle cx="10.5" cy="3.5" r="3.3" fill="#e9b83c"/><rect x="7.3" y="7" width="6.7" height="3.4" fill="#b8922e"/><rect x="7.3" y="8" width="6.7" height="1.5" fill="#f6c343"/><rect x="0" y="10.3" width="14" height="6.5" fill="#b8922e"/><rect x="0" y="11.5" width="14" height="2" fill="#d9b050"/><rect x="0" y="14.7" width="14" height="1.8" fill="#f6c343"/></svg>
<div class="cell" style="left:301px;top:683px">1479</div>
<div class="cell" style="left:381px;top:683px">A price list with wei...</div>
<div class="cell" style="left:531px;top:683px">A price list with wei...</div>
<div class="cell" style="left:681px;top:683px">A product with a re...</div>
<div class="cell" style="left:831px;top:683px">Audiovisual</div>
<div class="cell" style="left:931px;top:683px">Euro</div>
<div class="cell" style="left:1081px;top:683px">Min</div>
<div class="cell" style="left:1551px;top:683px">1</div>
<div class="cell" style="left:1631px;top:683px">-3.00</div>
<div class="cell" style="left:1721px;top:683px">-3.00</div>
<div class="cell" style="left:1811px;top:683px">-3.00</div>
<div class="clip" style="left:1893px;top:672px;width:10px;height:37px"><div class="cell" style="left:8px;top:11px">0</div></div>
<svg class="a" style="left:10px;top:680px" width="16" height="16" viewBox="0 0 16 16"><path d="M0 4 L4 0 L8 4 L12 0 L16 4 L12 8 L16 12 L12 16 L8 12 L4 16 L0 12 L4 8Z" fill="#961a10"/><path d="M0 4 L4 0 L8 4 L12 0 L16 4 L13.5 6.5 Q8 5.5 2.5 8.5 L4 8Z" fill="#a8392c"/></svg>
<svg class="a" style="left:50px;top:680px" width="16" height="16" viewBox="0 0 16 16"><g transform="rotate(45 8 8)"><rect x="-2" y="5.2" width="3.2" height="5.6" rx="1" fill="#f2954e"/><rect x="1" y="5.2" width="3.2" height="5.6" fill="#d2d2d2"/><rect x="4.2" y="5.2" width="10.3" height="5.6" fill="#f39a4c"/><rect x="4.2" y="5.2" width="10.3" height="2" fill="#f4c04e"/><path d="M14.5 5.2 L18.6 8 L14.5 10.8Z" fill="#f5a860"/><path d="M17 6.9 L18.6 8 L17 9.1Z" fill="#e86a20"/></g></svg>
<svg class="a" style="left:91px;top:679px" width="17" height="17" viewBox="0 0 17 17"><circle cx="6.5" cy="6.2" r="4.9" fill="#7a7a7a" stroke="#f6c343" stroke-width="1.4"/><path d="M10.5 10.5 L14.5 14.5" stroke="#5bb8e0" stroke-width="3.2" stroke-linecap="round"/></svg>
<svg class="a" style="left:125px;top:680px" width="15" height="16" viewBox="0 0 15 16"><path d="M1 3 L9 0.5 L9 3.5 L11 3.5 L11 12 L14 12.5 L14 15.5 L1 15.5Z" fill="#d9d9d9"/><path d="M9 3.5 L9 14.5 L11 15.5 L11 3.5Z" fill="#bdbdbd"/></svg>
<svg class="a" style="left:170px;top:679px" width="17" height="17" viewBox="0 0 17 17"><rect x="0.7" y="0.7" width="9.5" height="13" rx="1.5" fill="none" stroke="#5bb8e0" stroke-width="1.3"/><path d="M6 2.8 H12 L15.8 6.6 V15.5 Q15.8 16.3 15 16.3 H6.8 Q6 16.3 6 15.5Z" fill="#4b4b4b" stroke="#5bb8e0" stroke-width="1.3"/><rect x="7.7" y="6.5" width="5.3" height="1.3" fill="#f6c343"/><rect x="7.7" y="9" width="6" height="1.3" fill="#c9a85a"/><rect x="7.7" y="11.4" width="6" height="1.3" fill="#f6c343"/><rect x="7.7" y="13.6" width="6" height="1.2" fill="#f6c343"/></svg>
<svg class="a" style="left:242px;top:680px" width="13" height="16" viewBox="0 0 13 16"><rect x="0" y="0" width="12.5" height="16" rx="1.5" fill="#111"/><rect x="1.2" y="1.7" width="10" height="3" fill="#e8e8e8"/><rect x="1.3" y="7" width="2.2" height="1.6" fill="#f6c343"/><rect x="5" y="7" width="2.2" height="1.6" fill="#bbb"/><rect x="8.6" y="7" width="2.5" height="1.6" fill="#bbb"/><rect x="1.3" y="10" width="2.2" height="1.6" fill="#bbb"/><rect x="5" y="10" width="2.2" height="1.6" fill="#bbb"/><rect x="1.3" y="13" width="2.2" height="1.6" fill="#bbb"/><rect x="5" y="13" width="2.2" height="1.6" fill="#bbb"/><rect x="8.6" y="9.8" width="2.6" height="5" fill="#5bb8e0"/></svg>
<svg class="a" style="left:1181px;top:680px" width="17" height="16" viewBox="0 0 17 16"><path d="M8.5 5.5 V7.5 M4.5 9.5 V7.5 H12.5 V9.5" stroke="#888" stroke-width="1" fill="none"/><rect x="4.7" y="0.5" width="6.6" height="5" rx="1.3" fill="#f5b942"/><rect x="0.2" y="9.5" width="6.6" height="5" rx="1.3" fill="#f5b942"/><rect x="9.2" y="9.5" width="6.6" height="5" rx="1.3" fill="#f5b942"/></svg>
<svg class="a" style="left:1351px;top:680px" width="17" height="16" viewBox="0 0 17 16"><path d="M8.5 5.5 V7.5 M4.5 9.5 V7.5 H12.5 V9.5" stroke="#888" stroke-width="1" fill="none"/><rect x="4.7" y="0.5" width="6.6" height="5" rx="1.3" fill="#f5b942"/><rect x="0.2" y="9.5" width="6.6" height="5" rx="1.3" fill="#f5b942"/><rect x="9.2" y="9.5" width="6.6" height="5" rx="1.3" fill="#f5b942"/></svg>
<svg class="a" style="left:1522px;top:679px" width="16" height="17" viewBox="0 0 16 17"><circle cx="10.5" cy="3.5" r="3.3" fill="#e9b83c"/><rect x="7.3" y="7" width="6.7" height="3.4" fill="#b8922e"/><rect x="7.3" y="8" width="6.7" height="1.5" fill="#f6c343"/><rect x="0" y="10.3" width="14" height="6.5" fill="#b8922e"/><rect x="0" y="11.5" width="14" height="2" fill="#d9b050"/><rect x="0" y="14.7" width="14" height="1.8" fill="#f6c343"/></svg>
<div class="cell" style="left:301px;top:720px">1480</div>
<div class="cell" style="left:381px;top:720px">A price with a fixed ...</div>
<div class="cell" style="left:531px;top:720px">A price with a fixed ...</div>
<div class="cell" style="left:681px;top:720px">A product with a re...</div>
<div class="cell" style="left:831px;top:720px">Audiovisual</div>
<div class="cell" style="left:931px;top:720px">Euro</div>
<div class="cell" style="left:1081px;top:720px">Min</div>
<div class="cell" style="left:1551px;top:720px">1</div>
<div class="cell" style="left:1631px;top:720px">0.00</div>
<div class="cell" style="left:1721px;top:720px">0.00</div>
<div class="cell" style="left:1811px;top:720px">0.00</div>
<div class="clip" style="left:1893px;top:709px;width:10px;height:37px"><div class="cell" style="left:8px;top:11px">0</div></div>
<svg class="a" style="left:10px;top:717px" width="16" height="16" viewBox="0 0 16 16"><path d="M0 4 L4 0 L8 4 L12 0 L16 4 L12 8 L16 12 L12 16 L8 12 L4 16 L0 12 L4 8Z" fill="#961a10"/><path d="M0 4 L4 0 L8 4 L12 0 L16 4 L13.5 6.5 Q8 5.5 2.5 8.5 L4 8Z" fill="#a8392c"/></svg>
<svg class="a" style="left:50px;top:717px" width="16" height="16" viewBox="0 0 16 16"><g transform="rotate(45 8 8)"><rect x="-2" y="5.2" width="3.2" height="5.6" rx="1" fill="#f2954e"/><rect x="1" y="5.2" width="3.2" height="5.6" fill="#d2d2d2"/><rect x="4.2" y="5.2" width="10.3" height="5.6" fill="#f39a4c"/><rect x="4.2" y="5.2" width="10.3" height="2" fill="#f4c04e"/><path d="M14.5 5.2 L18.6 8 L14.5 10.8Z" fill="#f5a860"/><path d="M17 6.9 L18.6 8 L17 9.1Z" fill="#e86a20"/></g></svg>
<svg class="a" style="left:91px;top:716px" width="17" height="17" viewBox="0 0 17 17"><circle cx="6.5" cy="6.2" r="4.9" fill="#7a7a7a" stroke="#f6c343" stroke-width="1.4"/><path d="M10.5 10.5 L14.5 14.5" stroke="#5bb8e0" stroke-width="3.2" stroke-linecap="round"/></svg>
<svg class="a" style="left:125px;top:717px" width="15" height="16" viewBox="0 0 15 16"><path d="M1 3 L9 0.5 L9 3.5 L11 3.5 L11 12 L14 12.5 L14 15.5 L1 15.5Z" fill="#d9d9d9"/><path d="M9 3.5 L9 14.5 L11 15.5 L11 3.5Z" fill="#bdbdbd"/></svg>
<svg class="a" style="left:170px;top:716px" width="17" height="17" viewBox="0 0 17 17"><rect x="0.7" y="0.7" width="9.5" height="13" rx="1.5" fill="none" stroke="#5bb8e0" stroke-width="1.3"/><path d="M6 2.8 H12 L15.8 6.6 V15.5 Q15.8 16.3 15 16.3 H6.8 Q6 16.3 6 15.5Z" fill="#5b5b5b" stroke="#5bb8e0" stroke-width="1.3"/><rect x="7.7" y="6.5" width="5.3" height="1.3" fill="#f6c343"/><rect x="7.7" y="9" width="6" height="1.3" fill="#c9a85a"/><rect x="7.7" y="11.4" width="6" height="1.3" fill="#f6c343"/><rect x="7.7" y="13.6" width="6" height="1.2" fill="#f6c343"/></svg>
<svg class="a" style="left:242px;top:717px" width="13" height="16" viewBox="0 0 13 16"><rect x="0" y="0" width="12.5" height="16" rx="1.5" fill="#111"/><rect x="1.2" y="1.7" width="10" height="3" fill="#e8e8e8"/><rect x="1.3" y="7" width="2.2" height="1.6" fill="#f6c343"/><rect x="5" y="7" width="2.2" height="1.6" fill="#bbb"/><rect x="8.6" y="7" width="2.5" height="1.6" fill="#bbb"/><rect x="1.3" y="10" width="2.2" height="1.6" fill="#bbb"/><rect x="5" y="10" width="2.2" height="1.6" fill="#bbb"/><rect x="1.3" y="13" width="2.2" height="1.6" fill="#bbb"/><rect x="5" y="13" width="2.2" height="1.6" fill="#bbb"/><rect x="8.6" y="9.8" width="2.6" height="5" fill="#5bb8e0"/></svg>
<svg class="a" style="left:1181px;top:717px" width="17" height="16" viewBox="0 0 17 16"><path d="M8.5 5.5 V7.5 M4.5 9.5 V7.5 H12.5 V9.5" stroke="#888" stroke-width="1" fill="none"/><rect x="4.7" y="0.5" width="6.6" height="5" rx="1.3" fill="#f5b942"/><rect x="0.2" y="9.5" width="6.6" height="5" rx="1.3" fill="#f5b942"/><rect x="9.2" y="9.5" width="6.6" height="5" rx="1.3" fill="#f5b942"/></svg>
<svg class="a" style="left:1351px;top:717px" width="17" height="16" viewBox="0 0 17 16"><path d="M8.5 5.5 V7.5 M4.5 9.5 V7.5 H12.5 V9.5" stroke="#888" stroke-width="1" fill="none"/><rect x="4.7" y="0.5" width="6.6" height="5" rx="1.3" fill="#f5b942"/><rect x="0.2" y="9.5" width="6.6" height="5" rx="1.3" fill="#f5b942"/><rect x="9.2" y="9.5" width="6.6" height="5" rx="1.3" fill="#f5b942"/></svg>
<svg class="a" style="left:1522px;top:716px" width="16" height="17" viewBox="0 0 16 17"><circle cx="10.5" cy="3.5" r="3.3" fill="#e9b83c"/><rect x="7.3" y="7" width="6.7" height="3.4" fill="#b8922e"/><rect x="7.3" y="8" width="6.7" height="1.5" fill="#f6c343"/><rect x="0" y="10.3" width="14" height="6.5" fill="#b8922e"/><rect x="0" y="11.5" width="14" height="2" fill="#d9b050"/><rect x="0" y="14.7" width="14" height="1.8" fill="#f6c343"/></svg>
<div class="cell" style="left:301px;top:757px">1499</div>
<div class="cell" style="left:381px;top:757px">A price with a mini...</div>
<div class="cell" style="left:531px;top:757px">A price with a mini...</div>
<div class="cell" style="left:681px;top:757px">A product with a re...</div>
<div class="cell" style="left:831px;top:757px">Audiovisual</div>
<div class="cell" style="left:931px;top:757px">Euro</div>
<div class="cell" style="left:1081px;top:757px">Min</div>
<div class="cell" style="left:1551px;top:757px">1</div>
<div class="cell" style="left:1631px;top:757px">2.00</div>
<div class="cell" style="left:1721px;top:757px">2.00</div>
<div class="cell" style="left:1811px;top:757px">2.00</div>
<div class="clip" style="left:1893px;top:746px;width:10px;height:37px"><div class="cell" style="left:8px;top:11px">1</div></div>
<svg class="a" style="left:10px;top:754px" width="16" height="16" viewBox="0 0 16 16"><path d="M0 4 L4 0 L8 4 L12 0 L16 4 L12 8 L16 12 L12 16 L8 12 L4 16 L0 12 L4 8Z" fill="#961a10"/><path d="M0 4 L4 0 L8 4 L12 0 L16 4 L13.5 6.5 Q8 5.5 2.5 8.5 L4 8Z" fill="#a8392c"/></svg>
<svg class="a" style="left:50px;top:754px" width="16" height="16" viewBox="0 0 16 16"><g transform="rotate(45 8 8)"><rect x="-2" y="5.2" width="3.2" height="5.6" rx="1" fill="#f2954e"/><rect x="1" y="5.2" width="3.2" height="5.6" fill="#d2d2d2"/><rect x="4.2" y="5.2" width="10.3" height="5.6" fill="#f39a4c"/><rect x="4.2" y="5.2" width="10.3" height="2" fill="#f4c04e"/><path d="M14.5 5.2 L18.6 8 L14.5 10.8Z" fill="#f5a860"/><path d="M17 6.9 L18.6 8 L17 9.1Z" fill="#e86a20"/></g></svg>
<svg class="a" style="left:91px;top:753px" width="17" height="17" viewBox="0 0 17 17"><circle cx="6.5" cy="6.2" r="4.9" fill="#7a7a7a" stroke="#f6c343" stroke-width="1.4"/><path d="M10.5 10.5 L14.5 14.5" stroke="#5bb8e0" stroke-width="3.2" stroke-linecap="round"/></svg>
<svg class="a" style="left:125px;top:754px" width="15" height="16" viewBox="0 0 15 16"><path d="M1 3 L9 0.5 L9 3.5 L11 3.5 L11 12 L14 12.5 L14 15.5 L1 15.5Z" fill="#d9d9d9"/><path d="M9 3.5 L9 14.5 L11 15.5 L11 3.5Z" fill="#bdbdbd"/></svg>
<svg class="a" style="left:170px;top:753px" width="17" height="17" viewBox="0 0 17 17"><rect x="0.7" y="0.7" width="9.5" height="13" rx="1.5" fill="none" stroke="#5bb8e0" stroke-width="1.3"/><path d="M6 2.8 H12 L15.8 6.6 V15.5 Q15.8 16.3 15 16.3 H6.8 Q6 16.3 6 15.5Z" fill="#4b4b4b" stroke="#5bb8e0" stroke-width="1.3"/><rect x="7.7" y="6.5" width="5.3" height="1.3" fill="#f6c343"/><rect x="7.7" y="9" width="6" height="1.3" fill="#c9a85a"/><rect x="7.7" y="11.4" width="6" height="1.3" fill="#f6c343"/><rect x="7.7" y="13.6" width="6" height="1.2" fill="#f6c343"/></svg>
<svg class="a" style="left:242px;top:754px" width="13" height="16" viewBox="0 0 13 16"><rect x="0" y="0" width="12.5" height="16" rx="1.5" fill="#111"/><rect x="1.2" y="1.7" width="10" height="3" fill="#e8e8e8"/><rect x="1.3" y="7" width="2.2" height="1.6" fill="#f6c343"/><rect x="5" y="7" width="2.2" height="1.6" fill="#bbb"/><rect x="8.6" y="7" width="2.5" height="1.6" fill="#bbb"/><rect x="1.3" y="10" width="2.2" height="1.6" fill="#bbb"/><rect x="5" y="10" width="2.2" height="1.6" fill="#bbb"/><rect x="1.3" y="13" width="2.2" height="1.6" fill="#bbb"/><rect x="5" y="13" width="2.2" height="1.6" fill="#bbb"/><rect x="8.6" y="9.8" width="2.6" height="5" fill="#5bb8e0"/></svg>
<svg class="a" style="left:1181px;top:754px" width="17" height="16" viewBox="0 0 17 16"><path d="M8.5 5.5 V7.5 M4.5 9.5 V7.5 H12.5 V9.5" stroke="#888" stroke-width="1" fill="none"/><rect x="4.7" y="0.5" width="6.6" height="5" rx="1.3" fill="#f5b942"/><rect x="0.2" y="9.5" width="6.6" height="5" rx="1.3" fill="#f5b942"/><rect x="9.2" y="9.5" width="6.6" height="5" rx="1.3" fill="#f5b942"/></svg>
<svg class="a" style="left:1351px;top:754px" width="17" height="16" viewBox="0 0 17 16"><path d="M8.5 5.5 V7.5 M4.5 9.5 V7.5 H12.5 V9.5" stroke="#888" stroke-width="1" fill="none"/><rect x="4.7" y="0.5" width="6.6" height="5" rx="1.3" fill="#f5b942"/><rect x="0.2" y="9.5" width="6.6" height="5" rx="1.3" fill="#f5b942"/><rect x="9.2" y="9.5" width="6.6" height="5" rx="1.3" fill="#f5b942"/></svg>
<svg class="a" style="left:1522px;top:753px" width="16" height="17" viewBox="0 0 16 17"><circle cx="10.5" cy="3.5" r="3.3" fill="#e9b83c"/><rect x="7.3" y="7" width="6.7" height="3.4" fill="#b8922e"/><rect x="7.3" y="8" width="6.7" height="1.5" fill="#f6c343"/><rect x="0" y="10.3" width="14" height="6.5" fill="#b8922e"/><rect x="0" y="11.5" width="14" height="2" fill="#d9b050"/><rect x="0" y="14.7" width="14" height="1.8" fill="#f6c343"/></svg>
<div class="a" style="left:0;top:769px;width:1921px;height:124px;background:#282828"></div>
<div class="a" style="left:1px;top:769px;width:1902px;height:17px;background:#f0f0f0"></div>
<div class="a" style="left:19px;top:771px;width:1171px;height:13px;background:#c1c1c1"></div>
<div class="a" style="left:1903px;top:769px;width:17px;height:17px;background:#dcdcdc"></div>
<div class="a" style="left:1903px;top:295px;width:17px;height:474px;background:#f0f0f0"></div>
<div class="a" style="left:1906px;top:312px;width:11px;height:266px;background:#c1c1c1"></div>
<div class="triu" style="left:1907px;top:300px;border-left-width:4px;border-right-width:4px;border-bottom-width:4px;border-bottom-color:#a3a3a3"></div>
<div class="tri" style="left:1907px;top:758px;border-left-width:4px;border-right-width:4px;border-top-width:4px;border-top-color:#505050"></div>
<div class="a" style="left:1892px;top:773px;width:0;height:0;border-top:4px solid transparent;border-bottom:4px solid transparent;border-left:4px solid #505050"></div>
<div class="a" style="left:6px;top:773px;width:0;height:0;border-top:4px solid transparent;border-bottom:4px solid transparent;border-right:4px solid #a3a3a3"></div>
<div class="a" style="left:0;top:786px;width:1921px;height:36px;background:linear-gradient(#2b2b2b,#3b3b3b 50%,#2e2e2e)"></div>
<div class="a" style="left:0;top:780px;width:98px;height:43px;border:7px solid #1e9a2c;background:linear-gradient(#262626,#3a3a3a 50%,#262626)"></div>
<svg class="a" style="left:13px;top:793px" width="16" height="16" viewBox="0 0 16 16"><circle cx="8" cy="8" r="8" fill="#8bb545"/><path d="M8 3.5 V12.5 M3.5 8 H12.5" stroke="#fff" stroke-width="2.4"/></svg>
<div class="t" style="left:33px;top:797px;font-size:12px">Add price</div>
<div class="clip" style="left:98px;top:786px;width:20px;height:36px"><svg class="a" style="left:-1px;top:7px" width="16" height="16" viewBox="0 0 16 16"><circle cx="8" cy="8" r="8" fill="#8bb545"/><path d="M6 4.5 L12 8 L6 11.5Z" fill="#fff"/></svg></div>
<div class="t" style="left:116px;top:797px;font-size:12px">Generate export</div>
<div class="t" style="left:252px;top:797px;font-size:12px">|</div>
<svg class="a" style="left:291px;top:793px" width="16" height="16" viewBox="0 0 16 16"><circle cx="8" cy="8" r="7.8" fill="#e0562a"/><rect x="3.5" y="6.6" width="9" height="2.8" fill="#fff"/></svg>
<div class="t" style="left:312px;top:797px;font-size:12px">Show inactive prices</div>
<svg class="a" style="left:430px;top:792px" width="17" height="17" viewBox="0 0 17 17"><rect x="0.7" y="0.7" width="9.5" height="13" rx="1.5" fill="none" stroke="#5bb8e0" stroke-width="1.3"/><path d="M6 2.8 H12 L15.8 6.6 V15.5 Q15.8 16.3 15 16.3 H6.8 Q6 16.3 6 15.5Z" fill="#333" stroke="#5bb8e0" stroke-width="1.3"/><rect x="7.7" y="6.5" width="5.3" height="1.3" fill="#f6c343"/><rect x="7.7" y="9" width="6" height="1.3" fill="#c9a85a"/><rect x="7.7" y="11.4" width="6" height="1.3" fill="#f6c343"/><rect x="7.7" y="13.6" width="6" height="1.2" fill="#f6c343"/></svg>
<div class="t" style="left:450px;top:797px;font-size:12px">Copy files to Storage Server</div>
<div class="a" style="left:0;top:822px;width:1920px;height:35px;background:linear-gradient(#2b2b2b,#3c3c3c 50%,#2e2e2e)"></div>
<div class="a" style="left:64px;top:825px;width:30px;height:30px;background:#5d5d5d"></div>
<svg class="a" style="left:14px;top:835px" width="9" height="9" viewBox="0 0 9 9"><rect x="0" y="0" width="1.6" height="9" fill="#9a9a9a"/><path d="M8.5 0 V9 L2 4.5Z" fill="#9a9a9a"/></svg>
<svg class="a" style="left:46px;top:835px" width="7" height="9" viewBox="0 0 7 9"><path d="M6.5 0 V9 L0 4.5Z" fill="#9a9a9a"/></svg>
<svg class="a" style="left:256px;top:835px" width="7" height="9" viewBox="0 0 7 9"><path d="M0.5 0 V9 L7 4.5Z" fill="#fff"/></svg>
<svg class="a" style="left:284px;top:835px" width="9" height="9" viewBox="0 0 9 9"><path d="M0.5 0 V9 L7 4.5Z" fill="#fff"/><rect x="7.2" y="0" width="1.6" height="9" fill="#fff"/></svg>
<div class="t" style="left:75px;top:832px;font-size:13px">1</div>
<div class="t" style="left:105px;top:832px;font-size:13px">2</div>
<div class="t" style="left:135px;top:832px;font-size:13px">3</div>
<div class="t" style="left:165px;top:832px;font-size:13px">4</div>
<div class="t" style="left:195px;top:832px;font-size:13px">5</div>
<div class="t" style="left:224px;top:832px;font-size:13px">...</div>
<div class="t" style="left:318px;top:832px;font-size:12px">Page</div>
<div class="inp" style="left:352px;top:826px;width:68px;height:28px"></div>
<div class="t" style="left:362px;top:832px;font-size:13px;color:#111">1</div>
<div class="t" style="left:428px;top:832px;font-size:12px">of 6</div>
<div class="fb" style="left:463px;top:826px;width:68px;height:28px"></div>
<div class="inp" style="left:463px;top:826px;width:43px;height:28px;border-radius:3px 0 0 3px"></div>
<div class="t" style="left:471px;top:832px;font-size:13px;color:#111">20</div>
<div class="tri" style="left:514px;top:837px"></div>
<div class="t" style="left:539px;top:832px;font-size:12px">items per page</div>
<div class="t" style="left:1699px;top:832px;font-size:12px">1 - 20 of 113 items</div>
<div class="a" style="left:1812px;top:827px;width:26px;height:26px;border-radius:10px;background:#1e1e1e"></div>
<div class="a" style="left:1852px;top:827px;width:26px;height:26px;border-radius:10px;background:#1e1e1e"></div>
<div class="a" style="left:1892px;top:827px;width:26px;height:26px;border-radius:10px;background:#1e1e1e"></div>
<svg class="a" style="left:1817px;top:832px" width="17" height="17" viewBox="0 0 17 17"><rect x="7.6" y="1" width="1.8" height="15" fill="#fff"/><path d="M0.5 8.5 L5 5 V12Z M16.5 8.5 L12 5 V12Z" fill="#fff"/><rect x="4" y="7.7" width="9" height="1.6" fill="#fff"/></svg>
<svg class="a" style="left:1858px;top:833px" width="17" height="15" viewBox="0 0 17 15"><path d="M0.5 0.5 H4.5 L9 5.5 V14.5 H6.3 V7.5Z" fill="#fff"/><path d="M9 6.5 L11.5 4" stroke="#fff" stroke-width="2.2"/><path d="M8.5 0.8 L15.5 7.5" stroke="#fff" stroke-width="1.8"/></svg>
<svg class="a" style="left:1897px;top:832px" width="17" height="17" viewBox="0 0 17 17"><path d="M8 3.2 A5.7 5.7 0 1 0 13.4 6.9" fill="none" stroke="#fff" stroke-width="2.2"/><path d="M7.5 0 L13 3.3 L7.5 6.6Z" fill="#fff"/></svg>
<div class="t" style="left:838px;top:880px;font-size:10px;line-height:14px;-webkit-text-stroke:0.25px #fff">Copyright © 2012 <i style="-webkit-text-stroke:0"><span style="color:#888">C</span><span style="color:#f6c343">O</span><span style="color:#5bb8e0">O</span><span style="color:#888">NA.NET</span></i> ltd. All rights reserved.</div>
<div class="a" style="left:0;top:0;width:1px;height:780px;background:#e8e8e8"></div>
<div class="a" style="left:0;top:823px;width:1px;height:70px;background:#e8e8e8"></div>
<div class="a" style="left:1px;top:1px;width:1px;height:768px;background:#1e1e1e"></div>
<div class="a" style="left:1px;top:823px;width:1px;height:70px;background:#1e1e1e"></div>
</body></html>
